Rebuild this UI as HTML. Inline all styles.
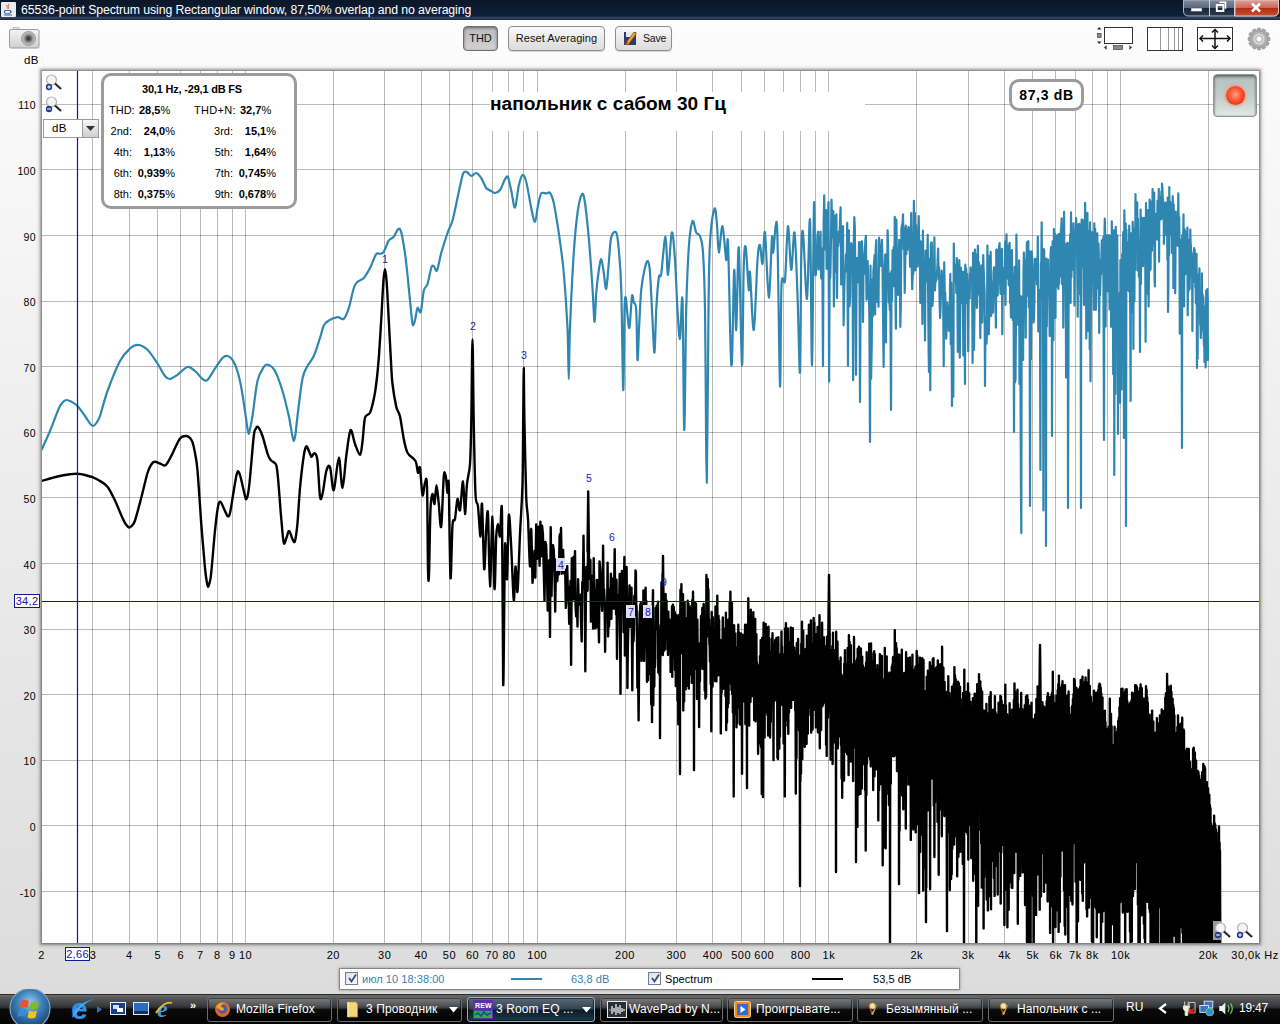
<!DOCTYPE html>
<html><head><meta charset="utf-8"><title>65536-point Spectrum</title>
<style>
*{box-sizing:border-box;margin:0;padding:0}
html,body{width:1280px;height:1024px;overflow:hidden}
body{position:relative;font-family:"Liberation Sans",sans-serif;font-size:11px;color:#000;
 background:linear-gradient(#fdfdfd 0,#fbfbfb 60px,#ececec 500px,#dcdcdc 994px,#dcdcdc 1024px)}
.abs{position:absolute}
#titlebar{left:0;top:0;width:1280px;height:20px;background:linear-gradient(#0b1728 0,#0f1f38 15px,#15294a 17px,#4f5f76 18px,#0f1d33 19px,#2a3a50 20px)}
#titlebar .t{left:21px;top:2px;color:#fff;font-size:12.3px;line-height:16px;white-space:nowrap;letter-spacing:-0.1px}
.btn{border:1px solid #8e8e8e;border-radius:4px;background:linear-gradient(#fbfbfb,#e9e9e9 50%,#dcdcdc);font-size:11px;line-height:23px;text-align:center;color:#111;height:25px;top:26px;box-shadow:0 1px 1px rgba(0,0,0,.15)}
.btn.on{background:linear-gradient(#b9b9b9,#d2d2d2);border-color:#6e6e6e;box-shadow:inset 0 1px 3px rgba(0,0,0,.45)}
.ylab{left:0;width:36px;text-align:right;font-size:10.500px;line-height:12px;letter-spacing:.35px}
.xlab{top:949px;font-size:11px;line-height:12px;letter-spacing:.5px;white-space:nowrap;transform:translateX(-50%)}
#thd{left:101px;top:73px;width:196px;height:136px;border:3px solid #9b9b9b;border-radius:10px;background:#fff}
#thd div{position:absolute;font-size:11px;line-height:13px;white-space:nowrap}
#thd b{font-weight:bold}
#lvl{left:1009px;top:79px;width:75px;height:32px;border:3px solid #9b9b9b;border-radius:10px;background:#fff;font-weight:bold;font-size:14px;line-height:27px;text-align:center;letter-spacing:.7px}
#ttl{left:490px;top:92px;width:375px;height:39px;background:#fff;font-weight:bold;font-size:19.1px;line-height:22px;padding-top:1px;white-space:nowrap}
#legend{left:340px;top:969px;width:619px;height:20px;background:#fff;box-shadow:0 0 0 1px rgba(0,0,0,.22),0 0 3px 1px rgba(0,0,0,.35)}
#legend div{position:absolute;font-size:11px;line-height:13px;top:4px;white-space:nowrap;letter-spacing:.05px}
.cb{width:13px;height:13px;border:1px solid #6f7f99;background:linear-gradient(135deg,#d9dde6,#fff);top:3px !important}
#taskbar{left:0;top:994px;width:1280px;height:30px;background:linear-gradient(#2b2b2b 0,#2b2b2b 1px,#6b6c6e 1px,#565759 4px,#38393b 12px,#262728 14px,#0a0a0a 15px,#030303 30px)}
.tb{top:3px;height:25px;border:1px solid #6b6d70;border-radius:3px;background:linear-gradient(rgba(255,255,255,.22),rgba(255,255,255,.08) 48%,rgba(255,255,255,0) 52%);color:#fff;font-size:12px;line-height:22px;white-space:nowrap;overflow:hidden;padding-left:28px;letter-spacing:.1px;box-shadow:inset 0 0 0 1px rgba(0,0,0,.5)}
.tb.act{background:linear-gradient(#5a6a78,#33424f 48%,#0f1a24 52%,#1c3a4e);border-color:#9fb0bd}
.ti{position:absolute;left:6px;top:3px;width:17px;height:17px}
</style></head><body>

<div id="titlebar" class="abs"><svg class="abs" style="left:1px;top:2px" width="15" height="15" viewBox="0 0 15 15"><rect width="15" height="15" rx="1" fill="#e9ecf2"/><path d="M8 2c-2 2 1 3-1 5M6 3c-1 1.5 1 2 0 3.500" stroke="#d9612b" fill="none" stroke-width="1"/><path d="M3.500 8.500h6v2.500q-3 2-6 0zM9.500 9q2 0 0 2" stroke="#3d6fa5" fill="none" stroke-width="1"/><path d="M3 13h8" stroke="#3d6fa5"/></svg><div class="abs t">65536-point Spectrum using Rectangular window, 87,50% overlap and no averaging</div>
<svg class="abs" style="left:1183px;top:0" width="96" height="17" viewBox="0 0 96 17">
<defs><linearGradient id="wc" x1="0" y1="0" x2="0" y2="1"><stop offset="0" stop-color="#7f8b9c"/><stop offset=".48" stop-color="#5a687c"/><stop offset=".52" stop-color="#18263a"/><stop offset="1" stop-color="#2c3b52"/></linearGradient>
<linearGradient id="wx" x1="0" y1="0" x2="0" y2="1"><stop offset="0" stop-color="#dca396"/><stop offset=".48" stop-color="#c96a58"/><stop offset=".52" stop-color="#b32d16"/><stop offset="1" stop-color="#c8502f"/></linearGradient></defs>
<path d="M.5 0v11q0 5 5 5h85q5 0 5-5V0z" fill="url(#wc)" stroke="#aab5c4" stroke-width="1"/>
<path d="M52 0h43.500v11q0 5-5 5H52z" fill="url(#wx)" stroke="#e0c9c4" stroke-width="1"/>
<path d="M26.500 0v16M51.500 0v16" stroke="#c9d2de" stroke-width="1"/>
<rect x="8" y="8" width="11" height="3.500" fill="#fff" stroke="#44506a" stroke-width=".6"/>
<path d="M36.500 2.300h6v6.500" fill="none" stroke="#fff" stroke-width="1.600"/><rect x="33.800" y="5" width="6.600" height="6" fill="none" stroke="#fff" stroke-width="1.900"/>
<path d="M69 3.500l8 8M77 3.500l-8 8" stroke="#fff" stroke-width="2.600"/>
</svg>
</div>
<svg class="abs" style="left:8px;top:26px" width="33" height="24" viewBox="0 0 33 24">
<defs><linearGradient id="cg" x1="0" y1="0" x2="0" y2="1"><stop offset="0" stop-color="#f4f4f4"/><stop offset="1" stop-color="#cfcfcf"/></linearGradient>
<radialGradient id="lg"><stop offset="0" stop-color="#2a2a2a"/><stop offset=".3" stop-color="#555"/><stop offset=".6" stop-color="#9a9a9a"/><stop offset="1" stop-color="#c9c9c9"/></radialGradient></defs>
<rect x="5" y="1.500" width="6" height="3" fill="#ddd" stroke="#aaa" stroke-width=".6"/>
<rect x="1.500" y="3.500" width="29.500" height="18.500" rx="1.500" fill="url(#cg)" stroke="#9a9a9a"/>
<circle cx="20.500" cy="12.500" r="7" fill="url(#lg)" stroke="#8a8a8a" stroke-width=".8"/>
</svg>
<div class="abs btn on" style="left:463px;width:35px">THD</div>
<div class="abs btn" style="left:508px;width:97px;letter-spacing:.05px">Reset Averaging</div>
<div class="abs btn" style="left:615px;width:57px;text-align:left;padding-left:27px;letter-spacing:-.2px;font-size:10.500px">Save<svg class="abs" style="left:7px;top:4px" width="15" height="15" viewBox="0 0 15 15"><rect x="1" y="1" width="12" height="13" fill="#2d3a6e"/><rect x="3" y="1" width="8" height="5" fill="#e8e8e8"/><path d="M2 13L11 1l2.500 1.500L5 14z" fill="#e9a620" stroke="#7a4a10" stroke-width=".7"/><path d="M2 13l1.500-3 1.800 2z" fill="#b22"/></svg></div>
<svg class="abs" style="left:1094px;top:24px" width="180" height="30" viewBox="1094 24 180 30">
<rect x="1104.500" y="27.500" width="28" height="16" fill="#fff" stroke="#333" stroke-width="1"/>
<path d="M1099.200 27l2.300 2.600h-4.600zM1099.200 44l2.300-2.600h-4.600zM1104 47.500l2.600-2.300v4.600zM1132 47.500l-2.600-2.300v4.600z" fill="#333"/>
<rect x="1097.500" y="33.500" width="3.600" height="4" fill="#888" stroke="#444" stroke-width=".7"/>
<rect x="1113.500" y="45.500" width="9" height="4" fill="#888" stroke="#444" stroke-width=".7"/>
<rect x="1147.500" y="27.500" width="35" height="23" fill="#fff" stroke="#333" stroke-width="1"/>
<path d="M1160.500 28v22M1168.500 28v22M1174.500 28v22M1178.500 28v22" stroke="#999" stroke-width="1"/>
<rect x="1197.500" y="27.500" width="35" height="23" fill="#fff" stroke="#333" stroke-width="1"/>
<path d="M1200 38.500h30M1215 29.500v19" stroke="#111" stroke-width="1.500"/>
<path d="M1203 35.500l-3 3 3 3M1227 35.500l3 3-3 3M1212 32.500l3-3 3 3M1212 45.500l3 3 3-3" fill="none" stroke="#111" stroke-width="1.500"/>
<g transform="translate(1259 39)"><g fill="#a9a9a9" stroke="#8a8a8a" stroke-width=".5"><rect x="-1.900" y="-11" width="3.800" height="5" rx="1" transform="rotate(0)"/><rect x="-1.900" y="-11" width="3.800" height="5" rx="1" transform="rotate(30)"/><rect x="-1.900" y="-11" width="3.800" height="5" rx="1" transform="rotate(60)"/><rect x="-1.900" y="-11" width="3.800" height="5" rx="1" transform="rotate(90)"/><rect x="-1.900" y="-11" width="3.800" height="5" rx="1" transform="rotate(120)"/><rect x="-1.900" y="-11" width="3.800" height="5" rx="1" transform="rotate(150)"/><rect x="-1.900" y="-11" width="3.800" height="5" rx="1" transform="rotate(180)"/><rect x="-1.900" y="-11" width="3.800" height="5" rx="1" transform="rotate(210)"/><rect x="-1.900" y="-11" width="3.800" height="5" rx="1" transform="rotate(240)"/><rect x="-1.900" y="-11" width="3.800" height="5" rx="1" transform="rotate(270)"/><rect x="-1.900" y="-11" width="3.800" height="5" rx="1" transform="rotate(300)"/><rect x="-1.900" y="-11" width="3.800" height="5" rx="1" transform="rotate(330)"/></g><circle r="8.300" fill="#b4b4b4" stroke="#8f8f8f" stroke-width=".6"/><circle r="5.500" fill="#d8d8d8"/><circle r="3.200" fill="#fafafa" stroke="#999" stroke-width=".8"/></g>
</svg>
<div class="abs" style="left:24px;top:54px;font-size:11.500px;line-height:13px;letter-spacing:.3px">dB</div>
<div class="abs" style="left:42px;top:71px;width:1217px;height:872px;background:#fff;box-shadow:0 0 0 1px rgba(0,0,0,.12),0 0 0 2px rgba(0,0,0,.09),0 0 0 3px rgba(0,0,0,.05),0 0 4px 2px rgba(0,0,0,.28)"></div>
<svg class="abs" style="left:0;top:0" width="1280" height="1024" viewBox="0 0 1280 1024"><defs><clipPath id="pc"><rect x="42" y="71" width="1217" height="872"/></clipPath></defs><g clip-path="url(#pc)">
<path d="M92.5 71V943M129.5 71V943M157.5 71V943M180.5 71V943M200.5 71V943M217.5 71V943M232.5 71V943M245.5 71V943M333.5 71V943M384.5 71V943M421.5 71V943M449.5 71V943M472.5 71V943M492.5 71V943M508.5 71V943M523.5 71V943M537.5 71V943M625.5 71V943M676.5 71V943M712.5 71V943M741.5 71V943M764.5 71V943M783.5 71V943M800.5 71V943M815.5 71V943M828.5 71V943M916.5 71V943M968.5 71V943M1004.5 71V943M1032.5 71V943M1055.5 71V943M1075.5 71V943M1092.5 71V943M1107.5 71V943M1120.5 71V943M1208.5 71V943" stroke="rgba(0,0,0,.27)" stroke-width="1" fill="none" shape-rendering="crispEdges"/>
<path d="M42 891.5H1259M42 825.5H1259M42 760.5H1259M42 694.5H1259M42 629.5H1259M42 563.5H1259M42 497.5H1259M42 432.5H1259M42 366.5H1259M42 301.5H1259M42 235.5H1259M42 169.5H1259M42 104.5H1259" stroke="rgba(0,0,0,.27)" stroke-width="1" fill="none" shape-rendering="crispEdges"/>

<path d="M41.2 450.5C42.6 447.4 47.2 437.7 50.0 431.0C52.8 424.3 56.7 413.1 58.8 408.5C60.8 403.9 61.8 403.4 63.0 402.0C64.2 400.6 65.0 400.1 66.2 400.0C67.5 399.9 69.2 400.5 71.0 401.5C72.8 402.5 75.3 403.7 77.5 406.0C79.7 408.3 83.0 413.2 85.0 416.0C87.0 418.8 88.7 421.9 90.0 423.5C91.3 425.1 92.0 426.0 93.0 426.0C94.0 426.0 94.9 425.1 96.0 423.5C97.1 421.9 98.2 421.2 100.0 416.0C101.8 410.8 104.3 399.8 107.5 391.0C110.7 382.2 116.4 367.8 120.0 361.0C123.6 354.2 127.1 351.1 130.0 348.5C132.9 345.9 135.2 344.6 138.0 344.8C140.8 344.9 144.4 346.8 147.5 349.8C150.6 352.8 154.7 359.3 157.5 363.5C160.3 367.7 163.0 373.5 165.0 376.0C167.0 378.5 168.0 379.2 170.0 379.0C172.0 378.8 174.7 376.7 177.5 374.8C180.3 372.8 184.7 367.6 187.5 367.0C190.3 366.4 192.6 369.1 195.0 371.0C197.4 372.9 200.5 377.6 202.5 379.0C204.5 380.4 205.5 381.7 207.5 380.0C209.5 378.3 212.6 372.0 215.0 368.5C217.4 365.0 220.5 360.0 222.5 358.0C224.5 356.0 225.7 355.4 227.5 356.0C229.3 356.6 231.8 358.0 233.8 362.0C235.8 366.0 238.2 373.2 240.0 381.0C241.8 388.8 243.8 403.3 245.0 411.0C246.2 418.7 246.9 425.3 247.5 429.0C248.1 432.7 248.3 434.0 248.8 434.0C249.2 434.0 249.4 431.9 250.0 429.0C250.6 426.1 251.3 423.7 252.5 416.0C253.7 408.3 255.7 388.8 257.5 381.0C259.3 373.2 262.1 369.6 263.8 367.0C265.4 364.4 266.2 364.1 268.0 364.8C269.8 365.4 272.7 366.8 275.0 371.0C277.3 375.2 280.3 383.8 282.5 391.0C284.7 398.2 287.2 409.1 288.8 416.0C290.3 422.9 291.2 430.0 292.0 434.0C292.8 438.0 293.2 441.0 293.8 441.0C294.3 441.0 294.9 438.0 295.5 434.0C296.1 430.0 296.4 424.9 297.5 416.0C298.6 407.1 300.9 386.5 302.5 378.5C304.1 370.5 305.7 369.6 307.5 366.0C309.3 362.4 311.8 360.5 313.8 356.0C315.8 351.5 318.4 342.9 320.0 338.0C321.6 333.1 322.4 328.3 323.8 325.5C325.1 322.7 326.6 321.8 328.8 320.5C330.9 319.2 335.1 317.5 337.5 317.2C339.9 317.0 341.9 320.2 343.8 318.8C345.6 317.3 347.1 312.9 348.8 308.0C350.4 303.1 352.4 292.2 353.8 288.0C355.1 283.8 355.9 283.4 357.5 281.8C359.1 280.1 361.8 280.2 363.8 278.0C365.8 275.8 368.0 271.8 370.0 268.0C372.0 264.2 374.6 256.5 376.2 254.2C377.9 252.0 378.8 254.2 380.0 253.8C381.2 253.3 382.4 253.9 383.8 251.8C385.1 249.6 387.1 242.9 388.8 240.5C390.4 238.1 392.4 238.4 393.8 236.8C395.1 235.1 396.5 231.2 397.5 230.0C398.5 228.8 399.2 228.0 400.0 229.2C400.8 230.5 401.5 232.6 402.5 238.0C403.5 243.4 405.1 253.0 406.2 263.0C407.4 273.0 409.1 291.4 410.0 300.5C410.9 309.6 411.5 316.0 412.0 320.0C412.5 324.0 412.5 325.4 413.0 325.5C413.5 325.6 414.3 323.3 415.0 320.5C415.7 317.7 416.6 309.4 417.5 308.0C418.4 306.6 419.8 314.6 420.8 311.8C421.8 308.9 422.7 294.9 423.8 290.5C424.8 286.1 426.3 287.9 427.5 284.2C428.7 280.6 430.2 270.9 431.2 268.0C432.2 265.1 432.8 265.6 433.8 266.0C434.7 266.4 435.8 272.6 437.0 270.5C438.2 268.4 439.6 259.0 441.2 253.0C442.9 247.0 445.7 238.2 447.5 233.0C449.3 227.8 450.9 226.1 452.5 220.5C454.1 214.9 455.9 205.2 457.5 198.0C459.1 190.8 461.3 179.7 462.5 175.5C463.7 171.3 464.2 172.2 465.0 171.8C465.8 171.3 466.5 171.8 467.5 172.5C468.5 173.2 469.9 175.9 471.2 176.0C472.6 176.1 474.6 172.7 476.2 173.0C477.9 173.3 479.6 175.6 481.2 178.0C482.9 180.4 484.6 185.9 486.2 188.0C487.9 190.1 489.9 190.2 491.2 191.0C492.6 191.8 493.6 193.2 495.0 193.0C496.4 192.8 498.4 192.2 500.0 190.0C501.6 187.8 503.7 181.3 505.0 179.2C506.3 177.2 507.0 175.4 508.0 177.2C509.0 179.1 510.1 185.7 511.2 190.5C512.4 195.3 513.8 208.3 515.0 207.5C516.2 206.7 517.5 190.7 518.8 185.5C520.0 180.3 521.3 175.6 522.5 175.0C523.7 174.4 524.9 176.5 526.2 181.8C527.6 187.0 529.9 201.6 531.2 208.0C532.6 214.4 533.9 222.2 535.0 221.8C536.1 221.3 537.0 210.0 538.0 205.5C539.0 201.0 539.9 195.4 541.2 193.5C542.6 191.6 544.9 193.6 546.2 193.5C547.6 193.4 548.8 191.5 550.0 193.0C551.2 194.5 552.4 196.6 553.8 203.0C555.1 209.4 557.1 221.8 558.8 233.0C560.4 244.2 562.4 257.8 563.8 273.0C565.1 288.2 566.7 311.0 567.5 328.0C568.3 345.0 568.4 379.2 568.8 379.2C569.1 379.2 569.2 348.2 570.0 328.0C570.8 307.8 572.5 271.4 573.8 253.0C575.0 234.6 576.2 222.4 577.5 213.0C578.8 203.6 580.8 195.8 582.0 194.2C583.2 192.7 583.9 196.0 585.0 203.0C586.1 210.0 587.5 224.4 588.8 238.0C590.0 251.6 591.6 274.6 592.5 288.0C593.4 301.4 593.9 320.9 594.5 321.8C595.1 322.6 595.6 301.2 596.2 293.0C596.9 284.8 598.0 275.9 598.8 270.5C599.5 265.1 600.5 258.9 601.2 259.2C602.0 259.6 603.0 268.3 603.8 273.0C604.5 277.7 605.5 290.4 606.2 288.8C607.0 287.1 608.0 271.2 608.8 263.0C609.5 254.8 610.0 242.4 611.2 237.5C612.5 232.6 615.0 230.5 616.2 232.5C617.5 234.5 618.0 241.2 618.8 250.0C619.5 258.8 620.5 265.1 621.2 287.5C622.0 309.9 622.7 386.4 623.2 390.0C623.8 393.6 624.1 324.8 624.5 310.0C624.9 295.2 625.3 296.7 625.8 297.5C626.2 298.3 626.9 310.2 627.5 315.0C628.1 319.8 628.8 330.5 629.5 327.5C630.2 324.5 631.3 300.2 632.0 296.2C632.7 292.2 633.1 300.3 633.8 302.5C634.4 304.7 635.6 300.8 636.2 310.0C636.9 319.2 637.0 357.6 637.5 360.0C638.0 362.4 638.6 336.2 639.2 325.0C639.9 313.8 640.3 299.2 641.2 290.0C642.2 280.8 643.9 272.1 645.0 267.5C646.1 262.9 647.2 260.4 648.0 261.2C648.8 262.1 649.3 263.1 650.0 272.5C650.7 281.9 651.8 307.2 652.5 320.0C653.2 332.8 653.9 354.1 654.5 352.5C655.1 350.9 655.6 322.0 656.2 310.0C656.9 298.0 658.0 283.3 658.8 277.5C659.5 271.7 660.2 280.4 661.2 273.8C662.3 267.1 664.4 236.1 665.5 236.2C666.6 236.4 667.0 275.6 668.0 275.0C669.0 274.4 670.6 234.9 671.8 232.5C672.9 230.1 674.1 247.6 675.0 260.0C675.9 272.4 676.7 297.4 677.5 310.0C678.3 322.6 679.2 340.4 680.0 338.8C680.8 337.1 681.8 285.4 682.5 300.0C683.2 314.6 683.6 428.4 684.2 430.0C684.9 431.6 685.5 339.2 686.2 310.0C687.0 280.8 687.8 261.7 688.8 247.5C689.8 233.3 691.3 223.7 692.5 221.2C693.7 218.8 695.0 230.1 696.2 232.5C697.5 234.9 698.9 233.1 700.0 236.2C701.1 239.4 702.2 240.7 703.0 252.5C703.8 264.3 704.4 273.1 705.0 310.0C705.6 346.9 706.2 483.0 706.8 483.0C707.3 483.0 708.0 348.5 708.5 310.0C709.0 271.5 709.0 258.7 710.0 242.5C711.0 226.3 713.4 211.6 714.5 208.8C715.6 205.9 716.3 218.0 717.0 225.0C717.7 232.0 717.9 252.3 718.8 252.5C719.6 252.7 721.3 225.1 722.5 226.2C723.7 227.4 725.4 257.4 726.2 260.0C727.1 262.6 727.3 228.9 728.0 242.5C728.7 256.1 729.9 326.2 730.5 345.0C731.1 363.8 731.4 372.0 732.0 360.0C732.6 348.0 733.6 274.8 734.2 270.0C734.9 265.2 735.5 333.6 736.2 330.0C737.0 326.4 737.8 241.9 738.8 247.5C739.7 253.1 741.2 362.2 742.0 365.0C742.8 367.8 743.1 283.8 743.8 265.0C744.4 246.2 745.0 243.5 745.8 247.5C746.5 251.5 748.1 286.0 748.8 290.0C749.4 294.0 749.2 266.1 750.0 272.5C750.8 278.9 752.5 332.0 753.8 330.0C755.0 328.0 756.5 273.6 757.5 260.0C758.5 246.4 759.2 244.4 760.0 245.0C760.8 245.6 761.7 265.8 762.5 263.8C763.3 261.8 764.0 227.1 765.0 232.5C766.0 237.9 767.6 296.7 768.8 297.5C769.9 298.3 771.3 244.7 772.0 237.5C772.7 230.3 772.6 254.5 773.2 252.5C773.9 250.5 775.1 227.0 775.8 225.0C776.4 223.0 776.8 214.2 777.5 240.0C778.2 265.8 779.4 379.1 780.0 386.2C780.6 393.4 780.7 302.0 781.5 285.0C782.3 268.0 784.0 289.4 785.0 280.0C786.0 270.6 787.0 227.8 788.0 226.2C789.0 224.7 790.2 269.0 791.2 270.0C792.3 271.0 793.5 228.5 794.5 232.5C795.5 236.5 796.6 272.6 797.5 295.0C798.4 317.4 799.4 378.1 800.0 372.5C800.6 366.9 800.8 282.4 801.2 260.0C801.7 237.6 802.1 226.3 803.0 232.5C803.9 238.7 805.9 300.8 807.0 298.8C808.1 296.8 809.2 209.4 810.0 220.0C810.8 230.6 811.4 367.6 812.0 365.0C812.6 362.4 813.4 218.2 814.0 203.8C814.6 189.3 814.9 270.0 815.5 275.0C816.1 280.0 817.2 241.4 817.5 235.0L818 231.8L818.6 269.6L819.2 263.5L819.9 250.1L820.5 231.5L821.1 277.7L821.7 278.9L822.3 248.6L823 366L823.6 227.9L824.2 195.4L824.8 234.6L825.4 249.4L826 210L826.6 269L827.2 221.8L827.9 220.8L828.5 202.2L829.1 381.7L829.7 257.1L830.3 277.9L830.9 245.3L831.5 199.5L832.1 225.3L832.7 237.4L833.3 211.2L833.9 306.4L834.6 229.7L835.2 215.9L835.8 271.7L836.4 214.4L837 298.1L837.6 238.1L838.2 245.9L838.8 231.5L839.4 241.8L840 222.2L840.6 207.3L841.2 284.6L841.8 227L842.4 271.6L843 226.1L843.6 325.3L844.2 293.5L844.8 270.3L845.4 271.8L846 254.4L846.6 268.9L847.2 222.8L848 366L848.3 283.3L848.9 230.4L849.5 306.4L850.1 296.7L850.7 245.7L851.3 243.2L851.9 249.9L852.5 245.9L853.1 380.2L853.7 247.2L854.3 217.2L854.8 227.4L855.4 276L856 374.8L856.6 258L857.2 258.3L857.8 263.4L858.4 282.5L859 242.1L859.5 270L860 402L860.7 272.4L861.3 241.6L861.9 241.4L862.5 253.9L863 321.9L863.6 255L864.2 273.9L864.8 253.7L865.4 239.4L865.9 235.9L866.5 299.8L867.1 295.3L867.7 261L868.2 285.9L868.8 285.8L869.4 319.7L870 442L870.5 265.7L871.1 378.7L871.7 345.9L872.3 279.3L872.8 316.3L873.4 271.5L874 263.3L874.6 255.1L875.1 314.5L875.7 249L876.3 240.2L876.8 301.8L877.4 297.4L878 270.6L878.5 306.7L879.1 237.7L879.7 255.4L880.2 257.4L880.8 265.9L881.4 249.3L881.9 239.8L882.5 260.3L883.1 319.6L883.6 367L884.2 293.5L884.7 269.9L885.3 254.4L885.9 342.4L886.4 271.8L887 289.4L887.6 230.3L888.1 248.7L888.7 302.6L889.2 295.3L889.8 310L890.3 273.6L891 410L891.5 270.8L892 301L892.6 250.2L893.1 265.3L893.7 247L894.2 286.3L894.8 216.9L895.3 275.9L895.9 328.7L896.4 219.7L897 265.9L897.5 269.7L898.1 294.9L898.6 263.4L899.2 239.9L899.7 248.9L900.3 327L900.8 304.7L901.4 229.1L901.9 225.2L902.5 224.7L903 214.3L903.6 249.2L904.1 227.9L904.7 292.9L905.2 264.6L905.8 225.6L906.3 254.1L906.8 238.7L907.4 250L907.9 231.2L908.5 227L909 228L909.5 240.3L910.1 266.7L910.6 252.1L911.2 213L911.7 265.8L912.2 289.2L912.8 272.4L913.3 274.3L913.9 200.8L914.4 243.2L914.9 212.9L915.5 270.4L916 225.1L916.5 266.3L917.1 232.3L917.6 266.6L918.1 238.1L918.7 216L919.2 244.7L919.7 240.6L920.3 303L920.8 241.5L921.3 256.6L921.9 261L922.4 324L922.9 230.6L923.4 268L924 261.6L924.5 282.6L925 340.5L925.6 250.7L926.1 281.6L926.6 267.4L927.1 271.1L927.7 234.9L928.2 299.5L928.7 356L929 372L929.7 258.5L930.3 390.3L930.8 244.9L931.3 242.4L931.8 242.8L932.4 306L932.9 299.4L933.4 272.6L933.9 286.8L934.4 237.4L935 290.4L935.5 275.3L936 281.5L936.5 273L937 274.6L937.5 264L938.1 248.6L938.6 279.2L939.1 267.7L939.6 302.9L940.1 317.9L940.6 306.5L941.1 284.5L941.7 270.7L942.2 281.1L942.7 289L943.2 301.3L943.7 366.2L944.2 262.3L944.7 291.5L945.2 292.7L945.7 311.9L946.2 338.7L946.8 318.9L947.3 302.6L947.8 315.9L948.3 306L948.8 330.8L949.3 308.6L949.8 306.8L950.3 274.1L950.8 344.3L951.3 282.7L952 406L952.3 323.3L952.8 365.4L953.3 396.7L953.8 243.5L954.3 276.8L954.8 276.6L955.3 281.5L955.8 264.7L956.3 292.9L956.8 258.1L957.3 275L957.8 351.8L958.3 309.7L958.8 285.1L959.3 260.1L959.8 357.6L960.3 304.9L960.8 267.7L961.3 276.2L961.8 299.2L962.3 303L962.8 271.8L963.3 355.5L963.8 275.9L964.3 271.7L965 384L965.3 264.7L965.7 303.7L966.2 268.4L966.7 296.4L967.2 273.8L967.7 280.3L968.2 351.3L968.7 286.7L969.2 284.7L969.7 298.6L970.1 274.6L970.6 267.4L971.1 281.4L971.6 274.3L972.1 268.7L972.6 363L973.1 252.9L973.6 320.7L974 349.9L974.5 307.8L975 249.6L975.5 290.6L976 254.4L976.5 299.2L976.9 307.9L977.4 273.4L977.9 245.5L978.4 294.4L978.9 262.2L979.3 278.2L979.8 288L980.3 338.1L980.8 281.7L981.3 265.4L981.7 318.3L982.2 322.5L982.7 292L983.2 255L983.6 268.1L984.1 282L984.6 292.6L985 386L985.5 317.5L986 323.8L986.5 343.6L987 331.4L987.4 245.7L987.9 293L988.4 255.9L988.8 334.3L989.3 308L989.8 309.2L990.3 264.2L990.7 251.9L991.2 316L991.7 292.8L992.1 293.7L992.6 281.7L993.1 312.6L993.5 272L994 267.4L994.5 272.4L994.9 268.7L995.4 292.3L995.9 327.6L996.3 250L996.8 249.3L997.3 281.9L997.7 295.6L998.2 259.5L998.7 264.7L999.1 246.8L999.6 243.1L1000 279L1000.5 293.8L1001 290.5L1001.4 254.1L1001.9 248.8L1002.3 334.3L1002.8 278.4L1003.3 268.3L1003.7 290.3L1004.2 293.6L1004.6 274.8L1005.1 241.6L1005.5 304.9L1006 251.7L1006.5 234.4L1006.9 259.4L1007.4 271.5L1007.8 278.7L1008.3 245.7L1008.7 285.2L1009.2 266.1L1009.6 242.9L1010.1 303L1010.5 296.5L1011 317.5L1011.4 283.3L1011.9 250.2L1012.4 296.1L1012.8 320.1L1013.3 274.4L1013.7 323.5L1014 432L1014.6 266.8L1015 382.4L1015.5 379.7L1015.9 328.5L1016.4 234.6L1016.8 268.7L1017.3 300.2L1017.7 300.2L1018.2 324.9L1018.6 307.6L1019.1 260.4L1019.5 383.9L1020 295.5L1020.4 361.3L1021 494L1021.3 533.1L1021.7 296.7L1022.2 331.1L1022.6 323.8L1023.1 360L1023.5 273.3L1023.9 252.6L1024.4 277.3L1024.8 260.4L1025.3 292.5L1025.7 337.7L1026.1 271.6L1026.6 255.5L1027 242.1L1027.5 277.2L1027.9 295.9L1028.3 241L1028.8 307.3L1029.2 259.8L1029.6 251.3L1030 506L1030.5 286.9L1030.9 359.6L1031.4 285.2L1031.8 251.3L1032.2 259.7L1032.7 273.9L1033.1 300.7L1033.5 322.6L1034 318.4L1034.4 301.3L1034.8 258.9L1035.3 272.8L1035.7 266.7L1036.1 279.2L1036.6 258.5L1037 284.4L1037.4 274.7L1037.8 236.6L1038.3 331.4L1038.7 289.5L1039.1 325.9L1039.6 311.9L1040 310.6L1040.4 470L1040.8 263.1L1041.3 264.7L1041.7 222.3L1042.1 298.2L1042.5 286.3L1043 285.3L1043.4 510.4L1043.8 249.1L1044.2 250.9L1044.7 308.1L1045.1 324.2L1045.5 272.1L1046 546L1046.3 258.7L1046.8 326.6L1047.2 273L1047.6 268.2L1048 259.7L1048.4 288.7L1048.9 284.3L1049.3 297.9L1049.7 336.1L1050.1 307.6L1050.5 256L1051 247.2L1051.4 312L1051.8 313.8L1052 436L1052.6 241.4L1053 326.1L1053.4 340.2L1053.9 229.2L1054.3 246.3L1054.7 281.9L1055.1 233.9L1055.5 318L1055.9 241.2L1056.3 286.9L1056.8 242L1057.2 236.4L1057.6 235L1058 259.7L1058.4 289L1058.8 234.1L1059.2 283.5L1059.6 240.5L1060 276.7L1060.4 242.1L1060.9 230.8L1061.3 226.8L1061.7 218.3L1062.1 284.3L1062.5 247.5L1062.9 225.5L1063.3 327.6L1063.7 278L1064.1 211.8L1064.5 289.4L1064.9 269.7L1065.3 251.3L1065.7 258L1066.1 377.4L1066.5 243.5L1066.9 275.7L1067.3 275.7L1067.8 242.9L1068 508L1068.6 295.6L1069 275.9L1069.4 253.3L1069.8 260.1L1070.2 234.1L1070.6 303L1071 212.3L1071.4 277.3L1071.8 253.4L1072.2 234.3L1072.6 269.7L1073 269.2L1073.4 223.4L1073.7 257.8L1074.1 230.5L1074.5 305.7L1074.9 241.4L1075.3 241.3L1075.7 233.8L1076.1 218L1076.5 231.3L1076.9 228.4L1077.3 273.7L1077.7 316.7L1078.1 232.8L1078.5 224L1078.9 261L1079.3 223.9L1079.7 245.4L1080.1 294.6L1080.5 230.1L1081 508L1081.2 260.1L1081.6 219.5L1082 231.9L1082.4 267.2L1082.8 219.9L1083.2 228.5L1083.6 263.5L1084 305L1084.3 256L1084.7 275L1085.1 202.8L1085.5 234.5L1085.9 235.9L1086.3 338.6L1086.7 239.1L1087.1 298.7L1087.4 212.9L1087.8 256L1088.2 330.8L1088.6 297.5L1089 267.3L1089.4 230.5L1089.7 349.2L1090.1 222.3L1090.5 381.3L1090.9 301L1091.3 290.6L1091.7 263.9L1092 232L1092.4 244.2L1092.8 283.2L1093.2 282.4L1093.6 249.5L1093.9 309.8L1094.3 223.4L1094.7 243.3L1095.1 228.8L1095.5 246.5L1095.8 309.9L1096.2 302.1L1096.6 235.7L1097 247.1L1097.3 233.3L1097.7 288.1L1098.1 260.4L1098.5 243.7L1098.8 253.5L1099.2 333L1099.6 260L1100 295.1L1100.3 285.1L1100.7 264.9L1101.1 274.4L1101.5 251.5L1101.8 240.3L1102.2 265.2L1102.6 246.2L1103 247.2L1103.3 237.2L1103.7 347.6L1104 440L1104.4 236.5L1104.8 218.6L1105.2 236.4L1105.6 326.6L1105.9 243.2L1106.3 281.9L1106.7 235.3L1107 278.3L1107.4 252.2L1107.8 291.3L1108.1 260.4L1108.5 242.1L1108.9 235.2L1109.2 267.1L1109.6 309.5L1110 280.3L1110.3 251.3L1110.7 235.5L1111.1 326.8L1111.4 310.8L1111.8 221.4L1112.2 275.4L1112.5 292.4L1112.9 275.6L1113.2 374.3L1113.6 322.3L1114 230.4L1114.3 475L1114.7 236.4L1115 240.6L1115.4 393.9L1115.8 226.8L1116.1 243.5L1116.5 272.2L1116.9 235.3L1117.2 235.3L1117.6 302.6L1118 434L1118.3 293.1L1118.6 302.8L1119 325.7L1119.4 334.2L1119.7 312L1120.1 402.8L1120.4 260.1L1120.8 288.3L1121.1 262.7L1121.5 389.5L1121.9 282.1L1122.2 254.1L1122.6 284.3L1122.9 243.2L1123.3 231.8L1123.6 250.6L1124 438L1124.3 210.4L1124.7 229.9L1125 259.7L1125.4 303.5L1125.7 223.6L1126 526L1126.4 229.8L1126.8 263.5L1127.1 242.1L1127.5 254.8L1127.9 290L1128.2 250L1128.6 247L1128.9 291.3L1129.2 225.7L1129.6 241.5L1129.9 285L1130.3 312.3L1130.6 401L1131 233.4L1131.3 271.1L1131.7 235.9L1132 281.6L1132.4 312.1L1132.7 221.8L1133.1 235.7L1133.4 348.9L1133.8 235L1134.1 267.6L1134.4 301.3L1134.8 228.8L1135.1 270L1135.5 194.2L1135.8 231.5L1136.2 219.6L1136.5 231.2L1136.8 222.3L1137.2 202.3L1137.5 270.5L1137.9 218.5L1138.2 246L1138.6 244.2L1138.9 276.9L1139.2 276.1L1139.6 248.8L1140 352L1140.3 256.8L1140.6 209.5L1140.9 284.1L1141.3 224.4L1141.6 220.6L1141.9 217.8L1142.3 228.8L1142.6 257.9L1143 266.2L1143.3 252.5L1143.6 250.6L1144 217.8L1144.3 222.4L1144.6 221L1145 228.5L1145.3 267.3L1145.6 341.8L1146 203.1L1146.3 294.4L1146.6 275.8L1147 228.3L1147.3 243.9L1147.6 252.4L1148 210.1L1148.3 237L1148.6 306.6L1149 265L1149.3 271.5L1149.6 199.7L1150 243.3L1150.3 226.7L1150.6 269.6L1151 205.8L1151.3 229.6L1151.6 201.3L1151.9 250.6L1152.3 241.7L1152.6 189L1152.9 213.4L1153.3 201.5L1153.6 233.3L1153.9 232.6L1154.2 192.5L1154.6 279.3L1154.9 286.5L1155.2 219L1155.6 227L1155.9 213.8L1156.2 228.6L1156.5 215.2L1156.9 217.4L1157.2 239.4L1157.5 200.7L1157.8 207.8L1158.1 239.9L1158.5 202.4L1158.8 188.8L1159.1 261.7L1159.4 196.7L1159.8 212.8L1160.1 206.6L1160.4 203L1160.7 208.5L1161 219.4L1161.4 191.5L1161.7 218.6L1162 183.6L1162.3 187L1162.7 197.3L1163 199.7L1163.3 205.9L1163.6 202.5L1163.9 243.9L1164.2 225.4L1164.6 212.8L1164.9 235.2L1165.2 226.9L1165.5 202.6L1165.8 221.1L1166.2 231.6L1166.5 215.1L1166.8 231.8L1167.1 221.4L1167.4 259.8L1167.7 197.7L1168 312L1168.4 284.9L1168.7 214.9L1169 255.3L1169.3 187.1L1169.6 231.3L1169.9 201.4L1170.2 235.1L1170.6 212.4L1170.9 219.8L1171.2 202.8L1171.5 204L1171.8 253L1172.1 229.7L1172.4 229.3L1172.7 196L1173.1 209.4L1173.4 288L1173.7 204.7L1174 226.2L1174.3 238.3L1174.6 225.7L1174.9 229.1L1175.2 293.3L1175.5 249.2L1175.8 211.7L1176.1 224.4L1176.5 224.5L1176.8 242.9L1177.1 242.9L1177.4 217L1177.7 245.8L1178 228.9L1178.3 193.3L1178.6 221.9L1178.9 227.9L1179.2 217L1179.5 248.4L1179.8 333.7L1180.1 286.8L1180.4 247.5L1180.7 271.7L1181 239.8L1181.3 246.6L1181.6 280.7L1182 448L1182.2 235L1182.5 236.5L1182.9 235.2L1183.2 241.1L1183.5 214.3L1183.8 259.3L1184.1 306.4L1184.4 232L1184.7 229.3L1185 239.8L1185.3 274.3L1185.6 234.4L1185.9 273L1186.2 232.2L1186.5 259.8L1186.8 270.5L1187.1 267.2L1187.4 227.5L1187.7 315.5L1187.9 288.2L1188.2 257.1L1188.5 291.5L1188.8 266.4L1189.1 239.6L1189.4 255.2L1189.7 289L1190 260.7L1190.3 229.5L1190.6 243.2L1190.9 245.5L1191.2 271.5L1191.5 276.4L1191.8 264.4L1192.1 262.5L1192.4 331.1L1192.7 260.4L1193 282.4L1193.3 253L1193.6 273L1193.8 252.7L1194.1 248L1194.4 264.6L1194.7 249.7L1195 268.8L1195.3 287.6L1195.6 281.6L1195.9 303.5L1196.2 279.6L1196.5 253.8L1196.8 300.2L1197 368L1197.3 305.1L1197.6 358.5L1197.9 290.2L1198.2 274.7L1198.5 282.8L1198.8 292.4L1199.1 282.9L1199.4 268.3L1199.6 290.2L1199.9 308.2L1200.2 324.9L1200.5 319.8L1200.8 337.9L1201.1 326.5L1201.4 298L1201.7 314.2L1201.9 273.4L1202.2 330.2L1202.5 322.8L1202.8 294.7L1203.1 308.5L1203.4 297.4L1203.6 336.1L1204 346L1204.2 336.7L1204.5 362.2L1204.8 338.6L1205.1 310.3L1205.3 306.1L1205.6 367.5L1205.9 353.1L1206.2 290.5L1206.5 299.8L1206.8 329L1207 323.7L1207.3 289.2L1207.6 297.3L1207.9 360.1" fill="none" stroke="#2f86b0" stroke-width="2.2" stroke-linejoin="round" stroke-linecap="round"/>
<path d="M41.2 481.0C43.9 480.3 52.9 477.6 57.5 476.5C62.1 475.4 66.8 474.7 70.0 474.3C73.2 473.9 75.1 473.6 77.5 473.8C79.9 473.9 82.6 474.4 85.0 475.0C87.4 475.6 90.1 476.3 92.5 477.2C94.9 478.2 97.6 479.5 100.0 481.0C102.4 482.5 105.1 483.6 107.5 486.8C109.9 489.9 112.6 495.5 115.0 500.5C117.4 505.5 120.7 514.2 122.5 518.0C124.3 521.8 124.9 523.0 126.0 524.5C127.1 526.0 128.3 527.3 129.2 527.5C130.2 527.7 131.1 526.6 132.0 525.5C132.9 524.4 133.5 524.9 135.0 520.5C136.5 516.1 139.2 505.6 141.2 498.0C143.2 490.4 145.9 478.3 147.5 473.0C149.1 467.7 149.9 466.8 151.0 465.0C152.1 463.2 153.1 462.0 154.5 461.8C155.9 461.5 158.3 462.9 160.0 463.5C161.7 464.1 163.7 465.7 165.0 465.5C166.3 465.3 166.8 463.9 168.0 462.0C169.2 460.1 170.6 457.3 172.5 453.5C174.4 449.7 177.8 441.3 180.0 438.5C182.2 435.7 184.7 436.1 186.2 436.0C187.8 435.9 189.0 437.0 190.0 438.0C191.0 439.0 191.7 439.9 192.5 442.2C193.3 444.6 194.2 448.5 195.0 453.0C195.8 457.5 196.5 459.3 197.5 470.5C198.5 481.7 200.1 507.4 201.2 523.0C202.4 538.6 204.1 558.4 205.0 568.0C205.9 577.6 206.5 580.0 207.0 583.0C207.5 586.0 207.6 586.8 208.0 586.8C208.4 586.8 209.0 585.2 209.5 583.0C210.0 580.8 210.4 581.4 211.2 573.0C212.1 564.6 213.9 541.1 215.0 530.5C216.1 519.9 217.1 511.4 218.0 506.8C218.9 502.1 219.5 501.4 220.5 501.8C221.5 502.1 223.1 507.0 224.2 509.2C225.4 511.5 226.6 515.4 227.5 516.0C228.4 516.6 229.0 517.1 230.0 513.0C231.0 508.9 232.7 496.6 233.8 490.5C234.8 484.4 235.8 478.1 236.5 475.0C237.2 471.9 237.4 471.2 238.0 471.2C238.6 471.2 239.4 473.1 240.0 475.0C240.6 476.9 241.2 479.6 242.0 483.0C242.8 486.4 244.3 493.4 245.0 496.0C245.7 498.6 245.8 499.6 246.2 499.2C246.7 498.9 247.4 497.4 248.0 494.0C248.6 490.6 249.1 487.3 250.0 478.0C250.9 468.7 252.8 443.9 253.8 436.0C254.7 428.1 255.4 430.0 256.0 428.5C256.6 427.0 256.9 426.7 257.5 426.8C258.1 426.8 258.7 427.5 259.5 429.0C260.3 430.5 261.2 432.1 262.5 436.0C263.8 439.9 266.3 449.8 267.5 453.5C268.7 457.2 269.2 458.0 270.0 459.2C270.8 460.5 271.7 460.9 272.5 461.5C273.3 462.1 274.4 462.5 275.0 463.2C275.6 463.9 276.0 463.6 276.5 466.0C277.0 468.4 277.2 469.7 278.0 478.0C278.8 486.3 280.3 507.6 281.2 518.0C282.2 528.4 282.9 540.0 283.8 543.0C284.6 546.0 285.9 538.7 286.8 536.8C287.6 534.8 288.3 530.6 289.2 531.0C290.2 531.4 291.6 537.6 292.5 539.2C293.4 540.9 294.2 543.6 295.0 541.0C295.8 538.4 296.7 531.5 297.5 523.0C298.3 514.5 299.0 498.8 300.0 488.0C301.0 477.2 302.8 462.1 303.8 455.5C304.8 448.9 305.5 447.4 306.2 446.5C307.0 445.6 307.7 448.4 308.5 450.0C309.3 451.6 310.5 455.8 311.2 456.5C312.0 457.2 312.4 455.0 313.0 454.5C313.6 454.0 314.3 452.5 315.0 453.5C315.7 454.5 316.7 454.1 317.5 461.0C318.3 467.9 319.2 491.2 320.0 496.5C320.8 501.8 321.5 498.0 322.5 494.0C323.5 490.0 325.1 475.8 326.2 471.5C327.4 467.2 328.8 464.0 330.0 467.0C331.2 470.0 332.4 491.7 333.8 490.2C335.1 488.8 337.4 458.1 338.8 457.8C340.1 457.4 341.3 487.9 342.5 487.8C343.7 487.6 345.0 465.7 346.2 456.5C347.5 447.3 349.1 432.2 350.5 430.2C351.9 428.2 353.5 440.1 355.0 444.0C356.5 447.9 358.8 455.1 360.0 454.8C361.2 454.4 361.7 447.4 362.5 441.5C363.3 435.6 363.8 422.4 365.0 417.8C366.2 413.1 368.6 415.8 370.0 412.8C371.4 409.8 372.8 403.6 373.8 399.0C374.8 394.4 375.4 391.0 376.2 384.0C377.1 377.0 378.2 366.0 379.0 355.0C379.8 344.0 380.8 327.0 381.5 315.0C382.2 303.0 382.9 287.3 383.5 280.0C384.1 272.7 384.5 269.2 385.0 269.2C385.5 269.2 385.9 272.7 386.5 280.0C387.1 287.3 387.8 301.9 388.5 315.0C389.2 328.1 390.4 351.0 391.0 362.0C391.6 373.0 391.7 376.9 392.5 384.0C393.3 391.1 395.1 401.3 396.2 406.5C397.4 411.7 398.8 411.3 400.0 416.5C401.2 421.7 402.6 433.2 403.8 439.0C404.9 444.8 405.9 449.6 407.5 452.8C409.1 455.9 412.4 457.4 413.8 459.0C415.1 460.6 415.6 460.6 416.2 462.8C416.9 464.9 417.4 471.9 418.0 472.8C418.6 473.6 419.3 464.1 420.0 467.8C420.7 471.4 421.7 492.9 422.5 495.2C423.3 497.6 424.3 484.1 425.0 482.8C425.7 481.4 426.5 472.7 427.0 486.5C427.5 500.3 427.7 554.9 428.0 569.0C428.3 583.1 428.6 584.1 429.0 574.5C429.4 564.9 429.9 521.9 430.5 509.0C431.1 496.1 431.9 494.8 432.5 494.0C433.1 493.2 433.9 505.4 434.5 504.0C435.1 502.6 435.8 485.2 436.5 485.2C437.2 485.2 438.0 497.4 438.8 504.0C439.5 510.6 440.4 530.9 441.2 526.5C442.1 522.1 443.0 484.5 443.8 476.5C444.5 468.5 445.1 473.9 445.8 476.5C446.4 479.1 447.0 491.4 447.5 492.8C448.0 494.1 448.3 471.6 448.8 485.2C449.2 498.9 449.9 571.4 450.5 577.8C451.1 584.1 451.8 534.6 452.5 525.2C453.2 515.9 454.2 523.2 455.0 519.0C455.8 514.8 456.7 500.4 457.5 499.0C458.3 497.6 459.1 513.0 460.0 510.2C460.9 507.4 462.2 480.9 463.0 481.5C463.8 482.1 464.4 513.6 465.0 514.0C465.6 514.4 466.2 492.0 467.0 484.0C467.8 476.0 469.3 474.2 470.0 464.0C470.7 453.8 470.9 440.0 471.3 420.0C471.7 400.0 472.1 339.2 472.5 339.2C472.9 339.2 473.2 395.2 473.7 420.0C474.2 444.8 474.8 480.2 475.5 494.0C476.2 507.8 477.2 499.7 478.0 506.5C478.8 513.3 479.9 536.9 480.5 536.5C481.1 536.1 481.4 498.8 482.0 504.0C482.6 509.2 483.6 565.0 484.2 569.0C484.9 573.0 485.6 537.8 486.2 529.0C486.9 520.2 487.4 504.8 488.0 514.0C488.6 523.2 489.3 586.1 490.0 586.5C490.7 586.9 491.8 516.1 492.5 516.5C493.2 516.9 493.9 585.8 494.5 589.0C495.1 592.2 495.7 546.9 496.2 536.5C496.8 526.1 497.4 524.0 498.0 524.0C498.6 524.0 499.4 538.3 500.0 536.5C500.6 534.7 501.5 489.0 502.0 512.8C502.5 536.5 502.8 679.6 503.2 685.0C503.7 690.4 504.4 563.5 505.0 546.5C505.6 529.5 506.4 584.0 507.0 579.0C507.6 574.0 508.1 520.5 508.8 515.2C509.4 510.1 510.4 532.9 511.2 546.5C512.0 560.1 513.1 597.0 513.8 600.2C514.4 603.5 514.9 567.9 515.5 566.5C516.1 565.1 516.8 596.7 517.5 591.5C518.2 586.3 519.2 551.2 520.0 534.0C520.8 516.8 522.0 502.2 522.5 484.0C523.0 465.8 523.0 438.6 523.2 420.0C523.4 401.4 523.6 368.0 523.8 368.0C523.9 368.0 524.0 399.4 524.4 420.0C524.8 440.6 525.7 480.7 526.2 496.5C526.8 512.3 527.4 507.8 528.0 519.0C528.6 530.2 529.5 564.9 530.0 566.5C530.5 568.1 530.9 526.4 531.2 529.0C531.6 531.6 532.3 574.1 532.5 582.8L533.6 568.9L534.5 550.9L535.3 577.7L536.2 524.5L537.1 558.8L537.9 551.9L538.7 526.6L539.6 565.8L540.4 521.6L541.2 556.4L542.1 525.8L542.9 533.8L543.7 567.7L544.5 600.6L545.3 541.9L546.1 544.6L546.9 566.6L547.7 610.6L548.4 566.6L549.2 560.3L550 636.9L550.7 527.1L551.5 595.9L552.3 552.5L553 545.3L553.8 550.2L554.5 573.1L555.2 611.5L556 559.7L556.7 581.5L557.4 580.8L558.2 563.2L558.9 574.4L559.6 536L560.3 533.9L561 546.1L560.3 566.5L561 528L561.7 566.5L561.7 573.8L562.4 555.3L563.1 550L563.8 573.4L564.5 573.4L565.2 569.6L565.8 607.9L566.5 598.4L567.2 566.1L567.8 587.9L568.5 587.3L569.2 623.7L569.8 609.6L570.5 580.7L571.1 664.8L571.8 558.2L572.4 578.1L573.1 599.5L573.7 556.8L574.3 586.2L575 551.1L575.6 607L576.2 616.3L576.9 599.7L577.5 626.5L578.1 579.2L578.7 604.6L579.3 599.5L579.9 601.2L580.5 594.7L581.1 623.6L581.7 641.5L582.3 581.9L582.9 587.8L583.5 535.8L584.1 585.5L584.7 583.1L585.3 671.2L585.8 605.5L586.4 567L587 574.2L587.6 590.8L588.1 533.8L587.5 551.5L588.2 491.5L589 551.5L588.7 578.6L589.3 560.9L589.8 561.5L590.4 559.8L590.9 621.5L591.5 575.8L592.1 585.8L592.6 593.3L593.1 628.6L593.7 558.3L594.2 587.7L594.8 594.1L595.3 628.2L595.8 620.3L596.4 627.4L596.9 579.9L597.4 587L598 580.5L598.5 621.6L599 642.3L599.5 561.4L600.1 567.6L600.6 577.6L601.1 582.5L601.6 603.3L602.1 610.9L602.6 588.6L603.1 545.8L603.6 594.3L604.1 589.4L604.6 600.2L605.1 651.8L605.6 611.9L606.1 602.1L606.6 610L607.1 614.1L607.6 562.6L608.1 636.4L608.6 616L609 626.6L609.5 615.8L610 588.7L610.5 593.2L610.9 573.6L611.4 618.7L611.9 578.2L612.4 582.3L612.8 599.2L613.3 594.8L613.8 608.8L614.2 579.3L614.7 549.3L615.1 592.6L615.6 589L616.1 614.5L616.5 579.8L617 658.8L617.4 631.5L617.9 595.6L618.3 600.5L618.8 602.8L619.2 599L619.7 574L620.1 629.6L620.5 693.7L621 598L621.4 600.9L621.9 571L622.3 574.9L622.7 597.3L623.2 590.9L623.6 632.2L624 579.1L624.4 557L624.9 655.6L625.3 604.1L625.7 578.2L626.1 610L626.6 566.9L627 616L627.4 687.9L627.8 649.8L628.2 630.9L628.6 599.8L629 605.2L629.5 585.5L629.9 626.9L630.3 606.7L630.7 625L631.1 594.3L631.5 587.6L631.9 633.8L632.3 690.2L632.7 644.2L633.1 639.4L633.5 641.3L633.9 632.5L634.3 595.7L634.7 614.7L635.1 604.9L635.5 570.5L635.9 572.1L636.2 604.5L636.6 606.7L637 640.1L637.4 687.5L637.8 631.4L638.2 685.1L638.6 720.3L638.9 692L639.3 626.6L639.7 612.3L640.1 609.9L640.4 604.5L640.8 603L641.2 630.4L641.6 660.9L641.9 651L642.3 622.1L642.7 633.9L643 647.4L643.4 590.4L643.8 632.8L644.1 660.9L644.5 638.7L644.9 632.7L645.2 611L645.6 587.7L646 632.3L646.3 600.9L646.7 636.6L647 681.7L647.4 614.2L647.7 618.6L648.1 680.1L648.5 646.8L648.8 609.4L649.2 606.2L649.5 609L649.9 673.8L650.2 657.2L650.6 606.1L650.9 658.1L651.2 704.4L651.6 642.5L651.9 624.6L652 722L652.3 638.2L652.6 609.5L653 590.3L653.3 705.1L653.6 650.6L654 642L654.3 686.5L654.7 633L655 667.2L655.3 657.4L655.7 608L656 609L656.3 610.7L656.7 605.8L657 629.1L657.3 608.9L657.6 622.3L658 601.6L658.3 672.6L658.6 625.1L658.9 632.8L659.3 641.2L659.6 675.6L659.9 630.8L660 738L660.2 677L660.6 632.7L660.9 633L661.2 631.3L661.5 582.2L661.8 625.5L662.2 606.9L662.5 574.2L662.8 655L662.3 616L663 556L663.7 616L663.1 609.8L663.4 633.1L663.7 651.3L664 639.1L664.4 624.1L664.7 634.4L665 634.3L665.3 649.4L665.6 594L665.9 624.7L666.2 600.8L666.5 600.4L666.8 633.3L667.1 612.3L667.4 615.4L667.7 631.2L668 654.9L668.3 611.8L668.6 624L668.9 619.1L669.4 619.4L669.7 634.5L670.3 620.9L670.6 671.9L671.2 635L671.5 671.8L672 606.3L672.3 676.7L672.9 604.8L673.2 657L673.8 607L674.1 635.4L674.7 611.9L675 669.9L675.5 621.7L675.8 686.1L676.4 615L676.7 674.8L677.2 617.6L677.5 700.5L678 630.5L678.3 724.2L678.9 614.9L679.2 665.8L679.7 618.9L680 774L680 641.7L680.5 589.8L680.8 653.6L681.4 584.2L681.7 637.9L682.2 619.9L682.5 637.6L683 594.2L683.3 710.4L683.8 607.9L684.1 701.4L684.6 602.6L684.9 666.4L685.4 620L685.7 689.2L686.2 618.5L686.5 672.6L686.9 645.4L687.2 685.9L687.7 600.7L688 650.6L688.5 603.8L688.8 688.6L689.3 609L689.6 665L690 607.1L690.3 674.4L690.8 631L691.1 642.4L691.5 605.8L691.8 682.7L692.3 600L692.6 633.8L693 591.7L693.3 610.5L693.8 621.2L694 770L694.1 656.4L694.5 622.2L694.8 642.7L695.2 602.4L695.5 638.4L696 603.7L696.3 669L696.7 630.4L697 698.9L697.4 619.8L697.7 675.2L698.1 643.2L698.4 676.5L698.8 650.3L699.1 727L699.6 643.4L699.9 681.2L700.3 646.1L700.6 664L701 616L701.3 625.2L701.7 619.5L702 666.3L702.3 607.9L702.6 668.9L703 612.9L703.3 644.9L703.7 604L704 626.6L704.4 614.6L704.7 690.4L705.1 617.6L705.4 698.6L705.8 624.6L706.1 697.2L706.4 574.9L706.7 635.2L707.1 614.5L707.4 636.3L707.8 579.1L708.1 618.1L708.4 589.4L708.7 627.9L709.1 619.4L709.4 644.8L709.7 643.2L710 661.7L710.4 644.8L710.7 684.1L711 627.6L711.3 731.2L711.7 612L712 669L712.3 656.2L712.6 686.5L712.9 617.1L713.2 669.9L713.6 642.5L713.9 669.5L714.2 648.2L714.5 668.8L714.8 657.4L715.1 681.1L715.5 606.4L715.8 629.5L716.1 622.1L716.4 681.2L716.7 657.5L717 662.2L717.3 595.6L717.6 665.8L717.9 651.6L718.2 675.2L718.5 615.8L718.8 661.8L719.1 620.3L719.4 669.3L719.8 640L720.1 674.7L720.5 662.2L720.8 733.4L721.3 669.4L721.6 692.8L722 639.6L722.3 683.3L722.8 617.4L723.1 688.9L723.6 628.5L723.9 674.2L724.4 645.9L724.7 671.9L725.2 629.5L725.5 696.1L725.9 612.6L726.2 730.1L726.7 642.9L727 722.4L727.4 634.4L727.7 707.6L728.2 619.7L728.5 703.2L728.9 645.8L729.2 680.7L729.7 602.4L730 683.3L730.4 591.8L730.7 649.7L731.2 629.3L731.5 690.1L731.9 603.1L732.2 694L732.6 653.9L732.9 712.4L733.4 659.9L733.7 796.5L734.1 625.2L734.4 660.6L734.8 633.3L735.1 713.6L735.5 647.1L735.8 668.7L736.2 662.9L736.5 727.2L736.9 676.2L737.2 723.2L737.6 633.1L737.9 688L738.3 624.7L738.6 686.7L739 632.4L739.3 707.4L739.7 639.2L740 724.5L740.4 642.7L740.7 665.4L741 633.5L741.3 700.9L741.7 644L742 773.7L742.4 635L742.7 663.3L743.1 634.9L743.4 657.9L743.7 658.7L744 701.2L744.4 651.8L744.7 663.9L745.1 624.8L745.4 724.1L745.7 645L746 695.6L746.4 649.6L746.7 665.2L747 788L747 624.7L747.3 724.2L747.7 627.8L748 707.6L748.3 598.3L748.6 709.9L748.9 641.2L749.2 725.5L749.6 626.4L749.9 664.8L750.2 660L750.5 701.8L750.8 609.7L751.1 672.5L751.5 633.7L751.8 696.2L752.1 627.9L752.4 672.6L752.7 625.4L753 667.1L753.3 612.1L753.6 669.1L753.9 650.1L754.2 720.1L754.6 644.2L754.9 697.7L755.2 618.9L755.5 721.2L755.8 653.3L756.1 678.4L756.4 634.3L756.7 717.8L757 662.4L757.3 708.1L757.8 668.3L758.1 753.7L758.5 671.4L758.8 716.3L759.3 665.2L759.6 743.4L760 656.1L760.3 736.1L760.7 640.1L761 746.8L761.5 694.6L761.8 794L762.2 637.9L762.5 728.1L762.9 656.9L763 797L763.2 691.7L763.6 622.6L763.9 734.5L764.3 655.5L764.6 737.4L765 631.7L765.3 711.5L765.7 623.9L766 705.1L766.4 627.5L766.7 692.2L767.1 656.4L767.4 715L767.8 662.5L768.1 735.6L768.5 626.8L768.8 726.2L769.2 638L769.5 734.1L769.8 661.9L770.1 737.6L770.5 652.7L770.8 721.8L771.2 661.5L771.5 699.5L771.9 639.2L772.2 694.3L772.5 633.2L772.8 679.1L773.2 644L773.5 760L773.8 645.5L774.1 691.1L774.5 670L774.8 700.5L775.1 640.3L775.4 696.5L775.8 643L776.1 681.7L776.4 637.9L776.7 698.8L777.1 648.4L777.4 757.7L777.7 640.5L778 759.1L778.3 637.3L778.6 718.8L779 677L779.3 748.5L779.6 654.5L779.9 736.8L780.2 656.7L780.5 692.1L780.8 661L781.1 691.9L781.5 631.4L781.8 693.4L782.1 646.8L782.4 705.1L782.7 653.7L783 694.5L783.3 673.9L783.6 743.4L783.9 676.8L784.2 719.7L784.5 662.9L784.8 796.4L785.2 628.4L785.5 720.3L785.9 623.1L786.2 708.7L786.6 634.1L786.9 673.6L787.3 632.5L787.6 725.4L788 628.4L788.3 733.7L788.7 645.3L789 712.4L789.4 648.9L789.7 700.6L790.1 642.2L790.4 672.3L790.8 627.5L791.1 707.9L791.5 639.3L791.8 696.7L792.2 664.7L792.5 681.4L792.8 628.2L793.1 699.8L793.5 652.9L793.8 681.3L794.2 647.7L794.5 697.7L794.9 651.7L795.2 710.5L795.5 661.1L795.8 793.5L796.2 656.8L796.5 758.5L796.8 643.2L797.1 726.3L797.5 651.4L797.8 721.6L798.1 638.9L798.4 679.7L798.8 657L799.1 730.6L799.4 655.7L799.7 720.2L800 886L800.1 656.5L800.4 781.2L800.7 670.6L801 773.7L801.3 643.8L801.6 708.2L802 621.8L802.3 759.1L802.6 639.9L802.9 722.3L803.2 630.5L803.5 696.9L803.8 660.2L804.1 700.1L804.5 670.4L804.8 746.7L805.1 667.8L805.4 733L805.7 649L806 708L806.3 651.4L806.6 743.7L806.9 635.8L807.2 707.3L807.5 656.4L807.8 733.6L808.2 639.7L808.5 715.1L808.9 624.7L809.2 707.3L809.6 637L809.9 695.7L810.2 660.8L810.5 706.2L810.9 620.5L811.2 732.5L811.6 648.9L811.9 716.3L812.3 643L812.6 729.5L813 646L813.3 688.2L813.6 617.9L813.9 701.6L814.3 622.8L814.6 709.7L815 635.7L815.3 700L815.6 639.3L815.9 727.4L816.3 634.3L816.6 705.8L816.9 643L817.2 693L817.6 626.9L817.9 732.2L818.2 629.1L818.5 701.9L818.9 642.7L819.2 706.3L819.5 615.1L819.8 748.2L820.2 656.7L820.5 706.6L820.8 647.3L821.1 730.1L821.4 642.4L821.7 697.4L822.1 622.8L822.4 706.3L822.7 645.2L823 704.4L823.3 637L823.6 691.2L823.9 637.3L824.2 684.7L824.5 646.5L824.8 702.5L825.2 646.1L825.5 675.7L825.8 646.7L826.1 744.8L826.4 648.9L826.7 755.9L827 636.7L827.3 700.9L827.6 651.1L827.9 717.6L828.3 658.7L828.6 712.4L829 650.1L828.3 635L829 575L829.7 635L829.3 708.7L829.7 668.2L830 704.2L830.3 666.9L830.6 759.6L831 650.8L831.3 742.7L831.7 684.6L832 742.3L832.3 646.3L832.6 764.1L833 632.8L833.3 694.2L833.6 658.1L833.9 729.1L834.3 650.3L834.6 742.3L834.9 656.6L835.2 708.8L835.6 667L835.9 717.6L836 872L836.2 631.6L836.5 706.3L836.9 654.9L837.2 740L837.5 641.8L837.8 748.3L838.1 660.6L838.4 733.4L838.8 668.3L839.1 733.4L839.4 674.3L839.7 736.4L840 667.2L840.3 708.5L840.6 657.4L840.9 745L841.3 674.4L841.6 778.5L841.9 675.7L842.2 797.7L842.5 707.2L842.8 750.5L843.1 693.9L843.4 740.3L843.7 693.6L844 780.6L844.3 663.6L844.6 742.9L844.9 650.1L845.2 751.6L845.6 685.3L845.9 719.8L846.3 664.1L846.6 751.4L846.9 688.3L847.2 754.2L847.6 648.1L847.9 745.6L848.3 661.7L848.6 775L848.9 635.3L849.2 757.8L849.6 641.9L849.9 724.7L850.2 657.9L850.5 761.4L850.8 645.1L851.1 735.4L851.5 663.9L851.8 729.5L852.1 690.7L852.4 762.1L852.8 667.1L853.1 781.1L853.4 683.6L853.7 741.7L854 637L854.3 736.7L854.6 660.6L854.9 741.6L855.3 673.1L855.6 748L855.9 664L856 862L856.2 725.2L856.5 676.2L856.8 742L857.1 658.6L857.4 826.9L857.7 648.9L858 722.9L858.3 676.2L858.6 794.8L858.9 646.8L859.2 758.5L859.6 649.2L859.9 752.7L860.2 662.9L860.5 793.9L860.9 648.5L861.2 738.8L861.5 659.2L861.8 788.5L862.2 656.7L862.5 725.3L862.9 665.4L863.2 764L863.5 680.5L863.8 762.4L864.1 669.1L864.4 745.8L864.8 667.9L865.1 789.9L865.4 676.4L865.7 850.5L866.1 662.5L866.4 795.1L866.7 652.1L867 763.4L867.3 680.2L867.6 739.1L867.9 672.4L868.2 743.6L868.6 658.4L868.9 756.1L869.2 643.6L869.5 736.3L869.8 655.5L870.1 759L870.4 644.2L870.7 766.4L871 643.4L871.3 721.9L871.6 653.1L871.9 733.2L872.2 668.1L872.5 758L872.9 681.4L873.2 790.1L873.5 660.8L873.8 769.4L874.2 651.2L874.5 776.3L874.8 654.2L875.1 752.6L875.5 669.6L875.8 769.5L876.1 672.4L876.4 705.1L876.8 687.8L877.1 742.8L877.4 665.1L877.7 756.4L878 681.1L878.3 820.4L878.7 687.2L879 790.2L879.3 682.7L879.6 765.3L879.9 654.2L880.2 784.2L880.5 691.9L880.8 743.4L881.2 672L881.5 761.2L881.8 656L882.1 779.4L882.4 701.3L882.7 865.3L883 679.4L883.3 789.6L883.6 680.2L883.9 847.3L884.2 683.4L884.5 821.7L884.8 647.9L885.1 830.2L885.4 682.1L885.7 848.2L886.1 669.1L886.4 740.1L886.7 656.5L887 761.9L887.4 673.8L887.7 789.2L888 699.7L888.3 794.3L888.6 689.1L888.9 805L889.3 672.7L889.6 753.2L889.9 680.2L890 950L890.2 749.3L890.5 676.8L890.8 783.4L891.2 672.8L891.5 747.1L891.8 667L892.1 741.2L892.4 664.1L892.7 755.7L893 657.2L893.3 743.9L893.6 657.7L893.9 756.2L894.2 656.1L894.5 735.1L894.8 630.1L895.1 732.9L895.4 652.2L895.7 755.4L896.1 643.3L896.4 746L896.7 648.2L897 771L897.4 660L897.7 756.9L898 669.5L898.3 737.2L898.6 654.5L898.9 723.2L899 884L899.3 654.8L899.6 830.4L899.9 662.9L900.2 773.8L900.5 682.2L900.8 769.7L901.2 664.7L901.5 777.1L901.8 649.7L902.1 795.4L902.4 687.4L902.7 767.6L903 680.4L903.3 809.2L903.6 678.9L903.9 793.5L904.2 672.9L904.5 735.6L904.8 680.9L905.1 767.1L905.5 673.1L905.8 828.6L906.1 652.1L906.4 785.2L906.7 675.2L907 760.8L907.4 660.3L907.7 775.2L908 658.2L908.3 766.6L908.6 659.7L908.9 784.4L909.3 668.2L909.6 760.8L909.9 657.5L910.2 766.6L910.5 666.9L910.8 839.9L911.1 693.6L911.4 778.7L911.8 670.1L912.1 826.6L912.4 654.8L912.7 780.9L913 677.4L913.3 829.5L913.6 669.8L913.9 764.5L914.2 684.1L914.5 804L914.8 677.8L915.1 746.4L915.4 666.7L915.7 832.3L916.1 691L916.4 805.2L916.7 651L917 823.9L917.3 655.5L917.6 806.8L918 664.1L918.3 757.7L918.6 682.9L918.9 845L919 893L919.2 680.3L919.5 761.6L919.9 657.7L920.2 852L920.5 666.1L920.8 812.5L921.1 661.5L921.4 834.5L921.7 677.4L922 797.6L922.3 658.2L922.6 818.4L922.9 659.7L923.2 890.5L923.5 660L923.8 816.8L924.1 707.3L924.4 868.1L924.8 704.6L925.1 798L925.4 691.1L925.7 786.8L926 922L926 696.2L926.3 887.5L926.7 676.8L927 762.7L927.3 678.6L927.6 766.9L927.9 670.8L928.2 810.4L928.5 675L928.8 769.8L929.2 678.5L929.5 754.7L929.8 662.2L930.1 889.2L930.4 675.3L930.7 763.2L931 672.2L931.3 775.2L931.6 665.7L931.9 776.8L932.2 668.4L932.5 778.6L932.8 658.9L933.1 760.9L933.5 658.2L933.8 805.6L934.1 674.8L934.4 857L934.7 668.5L935 802.5L935.3 674.1L935.6 749.8L936 685.4L936.3 791L936.6 667L936.9 789.8L937.2 670.7L937.5 821.7L937.8 660.4L938.1 784.1L938.4 684.3L938.7 874.8L939 680.6L939.3 803.1L939.6 687.8L939.9 809.4L940.2 664.2L940.5 793.4L940.9 672L941.2 763.1L941.5 677L941.8 836.3L942.1 646.7L942.4 788.6L942.7 671.8L943 809.8L943.4 667.7L943.7 790.5L944 691.1L944.3 816L944.6 682L944.9 812.2L945.2 694.1L945.5 813.9L945.8 691.8L946.1 806.3L946.4 704.1L946.7 825.6L947 931L947 698.1L947.3 792.6L947.6 697L947.9 790.7L948.3 676.3L948.6 832.1L948.9 693.2L949.2 779L949.5 693L949.8 890.1L950.1 713.1L950.4 774.1L950.8 699L951.1 879.1L951.4 714.5L951.7 874.3L952 686.7L952.3 849.1L952.6 696.8L952.9 792.9L953.2 690.9L953.5 787.7L953.8 683.7L954.1 844.6L954.4 667.2L954.7 822.8L955 675.5L955.3 770.2L955.7 679.1L956 836.4L956.3 690.4L956.6 808.8L956.9 686.7L957.2 876.3L957.5 701.3L957.8 822L958.1 681.7L958.4 856.7L958.8 683.3L959.1 826.8L959.4 692.9L959.7 805.4L960 686.8L960.3 851.9L960.6 716.2L960.9 799.5L961.2 706.9L961.5 824.3L961.8 716.4L962.1 840.2L962.5 699.1L962.8 863.9L963.1 692.9L963.4 823.9L963.7 693.9L964 960L964.3 669.6L964.6 824.9L964.9 692L965.2 831.6L965.5 707L965.8 829.4L966.1 692L966.4 831.8L966.7 702.5L967 819.6L967.3 692.7L967.6 834.2L968 683.5L968.3 859.5L968.6 697.3L968.9 805.1L969.2 693.2L969.5 772.6L969.8 702.3L970.1 824.6L970.4 701.7L970.7 811.8L971 707.4L971.3 858.1L971.6 712.8L971.9 840.6L972.2 721.3L972.5 849.5L972.9 698.2L973.2 880.7L973.5 714.9L973.8 874.1L974.1 700.7L974.4 814.2L974.7 693.6L975 819.8L975.3 694.9L975.6 822.7L976 712L976.3 960L976.6 693.7L976.9 822.2L977.2 684.1L977.5 804.5L977.8 698.2L978.1 905.7L978.4 695L978.7 830.2L979 674.1L979.3 806L979.6 681L979.9 795L980.3 681.4L980.6 807.8L980.9 688.3L981.2 843.6L981.5 699.8L981.8 887.6L982.1 691.4L982.4 836.4L982.7 718.9L983 882.3L983.3 720.1L983.6 928.4L983.9 710.4L984.2 877.1L984.5 710.7L984.8 850.5L985.2 722.3L985.5 843.5L985.8 714.8L986.1 868L986.4 703.9L986.7 899.6L987 713L987.3 876.6L987.6 739.4L987.9 910.4L988.2 716.6L988.5 829.8L988.8 718.1L989.1 833.3L989.4 696.9L989.7 896.2L990 709.1L990.3 852.3L990.7 692.1L991 909.2L991.3 729.5L991.6 846.1L991.9 735.5L992.2 822.7L992.5 715.2L992.8 860.7L993.1 709.6L993.4 827.2L993.7 713.4L994 878.2L994.3 716.1L994.6 895.9L994.9 696.1L995.2 866.6L995.5 712.3L995.8 844.4L996.2 730.2L996.5 802.5L996.8 714.7L997.1 860.5L997.4 719.7L997.7 894.5L998 721.7L998.3 851.5L998.6 702.8L998.9 831L999.2 707.9L999.5 842.5L999.8 711.8L1000.1 802.1L1000.4 696L1000.7 903.5L1001 696.7L1001.3 852.5L1001.6 700.7L1001.9 842.9L1002.2 709.3L1002.5 844.8L1002.8 704.8L1003.1 820.7L1003.5 717.5L1003.8 831.9L1004.1 711.7L1004.4 925.1L1004.7 729L1005 890.1L1005.3 684.6L1005.6 839.1L1005.9 705.8L1006.2 880.1L1006.5 723.9L1006.8 840.5L1007.1 714.3L1007.4 927.3L1007.7 717.9L1008 891.6L1008.4 722.9L1008.7 909.7L1009 722.9L1009.3 855.5L1009.6 703.3L1009.9 842.2L1010.2 729.1L1010.5 882.4L1010.8 714.6L1011.1 813.5L1011.4 724.2L1011.7 887.6L1012 709.7L1012.3 888L1012.6 717.1L1012.9 868.7L1013.2 712.7L1013.5 822L1013.9 699.9L1014.2 873L1014.5 683.5L1014.8 784.8L1015.1 691.9L1015.4 828.6L1015.7 695.9L1016 807.9L1016.3 697.2L1016.6 851.9L1016.9 696.5L1017.2 844.5L1017.5 689.8L1017.8 923.8L1018.1 704.3L1018.4 879.7L1018.7 724.8L1019 862.1L1019.3 708.7L1019.6 856.6L1019.9 719.4L1020.2 875.9L1020.6 711.8L1020.9 816.1L1021.2 692.9L1021.5 859.2L1021.8 712L1022.1 865.8L1022.4 709.1L1022.7 872.4L1023 725.9L1023.3 832.2L1023.6 728.9L1023.9 817.2L1024.2 709.9L1024.5 853.8L1024.8 705.2L1025.1 905L1025.4 707.9L1025.7 875.4L1026 696.4L1026.3 869L1026.7 702.3L1027 944.1L1027.3 695.5L1027.6 927.2L1027.9 699.8L1028.2 879L1028.5 729.1L1028.8 960L1029.1 705.4L1029.4 902.9L1029.7 714.2L1030 878.1L1030.3 710.3L1030.6 943.1L1030.9 729.5L1031.2 841.1L1031.5 702.6L1031.8 878.8L1032.1 718.9L1032.4 842.4L1032.8 725L1033.1 896.3L1033.4 726.6L1033.7 960L1034 719.1L1034.3 872.4L1034.6 733.6L1034.9 886.2L1035.2 714.4L1035.5 887.8L1035.8 719L1036.1 914.9L1036.4 699L1036.7 856.5L1037 701.9L1037.3 874.6L1037.6 686.5L1037.9 821.4L1038.2 694L1038.5 832.5L1038.8 710.8L1039.1 866.7L1039.4 705.3L1039.7 909.8L1039.3 705L1040 645L1040.7 705L1040.1 698.6L1040.4 850.6L1040.7 711.3L1041 896.4L1041.3 705.1L1041.6 835.6L1041.9 712.6L1042.2 817.3L1042.5 702.3L1042.8 853.2L1043.1 707.8L1043.4 829.1L1043.7 706.2L1044 891.7L1044.3 711.9L1044.6 844.7L1044.9 714.2L1045.2 856.3L1045.5 726.4L1045.8 882.5L1046.1 707.2L1046.4 854.1L1046.7 701.3L1047 827.2L1047.3 696.4L1047.6 901.4L1047.9 693.1L1048.2 836.9L1048.6 712.6L1048.9 888.9L1049.2 702.1L1049.5 892.5L1049.8 697.1L1050.1 932.9L1050.4 698.5L1050.7 846.8L1051 705.6L1051.3 863.4L1051.6 694.3L1051.9 834.5L1052.2 692.5L1052.5 906.4L1052.8 671.8L1053.1 960L1053.4 695.4L1053.7 844.5L1054 708.7L1054.3 896.7L1054.6 703.2L1054.9 903.9L1055.2 709.7L1055.5 927.1L1055.9 702.9L1056.2 861.9L1056.5 695.7L1056.8 910.2L1057.1 703L1057.4 859.5L1057.7 690.2L1058 860.5L1058.3 684.3L1058.6 931.9L1058.9 675.6L1059.2 888L1059.5 688.9L1059.8 922.1L1060.1 687.6L1060.4 876.4L1060.7 691.8L1061 842.2L1061.3 703.5L1061.6 834.2L1061.9 684.7L1062.2 850.4L1062.5 681.3L1062.8 825.8L1063.1 685.1L1063.4 849L1063.7 686.3L1064 890.2L1064.4 696.9L1064.7 926L1065 685.1L1065.3 934.6L1065.6 704.9L1065.9 907.1L1066.2 705.5L1066.5 883.6L1066.8 705.1L1067.1 821.6L1067.4 695.6L1067.7 872.4L1068 713L1068.3 951.7L1068.6 691.4L1068.9 895.5L1069.2 707.7L1069.5 878.3L1069.8 722.2L1070.1 864.4L1070.4 719.1L1070.7 891.9L1071 714.6L1071.3 901.1L1071.6 717.8L1071.9 860.8L1072.2 706L1072.5 904.6L1072.9 699.3L1073.2 819.1L1073.5 694.2L1073.8 822.7L1074.1 678.9L1074.4 843.1L1074.7 680.2L1075 835.1L1075.3 687.4L1075.6 881.7L1075.9 691.6L1076.2 871.3L1076.5 688L1076.8 942.1L1077.1 700L1077.4 826.6L1077.7 689.7L1078 921.2L1078.3 698.4L1078.6 862.4L1078.9 698.4L1079.2 868.7L1079.5 688.8L1079.8 857.5L1080.1 687L1080.4 879.8L1080.7 679.9L1081 853.9L1081.3 692.7L1081.6 852.8L1081.9 692.5L1082.2 893.5L1082.5 676.6L1082.8 900.8L1083.1 685.1L1083.4 821.3L1083.7 684.2L1084 862.4L1084.4 684.7L1084.7 837.9L1085 681.6L1085.3 854.6L1085.6 677.4L1085.9 834.4L1086.2 682.1L1086.5 909.2L1086.8 690L1087.1 916.4L1087.4 699.5L1087.7 852.2L1088 688.9L1088.3 836.1L1088.6 670.2L1088.9 907.5L1089.2 690.1L1089.5 898L1089.8 685.9L1090.1 865.9L1090.4 696.1L1090.7 865.9L1091 697.1L1091.3 883.4L1091.6 702.7L1091.9 941.5L1092.2 708.5L1092.5 847.7L1092.8 708.7L1093.1 960L1093.4 708.1L1093.7 878.9L1094 690.6L1094.3 896.9L1094.6 698.7L1094.9 881.7L1095.3 693.4L1095.6 907.1L1095.9 694.6L1096.2 908.8L1096.5 692.7L1096.8 937.2L1097.1 696.7L1097.4 877.7L1097.7 700.8L1098 890.3L1098.3 689.8L1098.6 912.2L1098.9 685.8L1099.2 888.4L1099.5 683.6L1099.8 888.1L1100.1 684.5L1100.4 860L1100.7 687.6L1101 948L1101.3 693.4L1101.6 861.3L1101.9 711.3L1102.2 921.8L1102.5 697.5L1102.8 879.1L1103.1 711L1103.4 911.1L1103.7 711L1104 888.4L1104.3 718.8L1104.6 908.2L1104.9 710.6L1105.2 854.6L1105.5 722.2L1105.8 960L1106.1 728.7L1106.4 876.7L1106.8 733.2L1107.1 935.6L1107.4 745.2L1107.7 954.6L1108 729.4L1108.3 940.1L1108.6 726.6L1108.9 885.9L1109.2 729.2L1109.5 955.7L1109.8 698.7L1110.1 916.2L1110.4 733.9L1110.7 960L1111 713.8L1111.3 863.7L1111.6 726.1L1111.9 924.2L1112.2 745.4L1112.5 906.1L1112.8 744.9L1113.1 885.7L1113.4 750.9L1113.7 896L1114 745.9L1114.3 960L1114.6 726.7L1114.9 960L1115.2 737.6L1115.5 918.2L1115.8 738.4L1116.1 960L1116.4 735L1116.7 921.3L1117 732L1117.3 885L1117.6 728.7L1117.9 960L1118.2 721L1118.5 879L1118.8 718.1L1119.1 960L1119.5 707.1L1119.8 865.3L1120.1 698.1L1120.4 902L1120.7 699.1L1121 866.3L1121.3 689L1121.6 880.6L1121.9 693L1122.2 865.7L1122.5 688.7L1122.8 912.6L1123.1 709.7L1123.4 838.8L1123.7 698L1124 908.1L1124.3 701.6L1124.6 887.8L1124.9 692.1L1125.2 960L1125.5 689.6L1125.8 888.3L1126.1 700.6L1126.4 875.6L1126.7 689.3L1127 875.7L1127.3 701.2L1127.6 911.8L1127.9 707.5L1128.2 908.7L1128.5 705.4L1128.8 890.3L1129.1 704.3L1129.4 881.1L1129.7 708.7L1130 931.7L1130.3 702.6L1130.6 960L1130.9 704.8L1131.2 882.1L1131.5 700.4L1131.8 941.5L1132.1 692.7L1132.4 852.4L1132.7 694.8L1133 896.1L1133.3 701.2L1133.6 870.1L1134 695.4L1134.3 840.1L1134.6 692.8L1134.9 889.1L1135.2 685.1L1135.5 860.2L1135.8 685.3L1136.1 825L1136.4 685.8L1136.7 862.1L1137 687.4L1137.3 854.9L1137.6 694L1137.9 904.8L1138.2 704.5L1138.5 960L1138.8 691.5L1139.1 922.7L1139.4 701.9L1139.7 956.6L1140 688.1L1140.3 874.8L1140.6 684.4L1140.9 879.9L1141.2 698.5L1141.5 915.2L1141.8 688.3L1142.1 846.7L1142.4 697.8L1142.7 899.8L1143 699.7L1143.3 902.6L1143.6 713.7L1143.9 923.7L1144.2 698.6L1144.5 938.2L1144.8 702.2L1145.1 960L1145.4 704.3L1145.7 889.2L1146 686.2L1146.3 890.1L1146.6 689.8L1146.9 885.7L1147.2 697.4L1147.5 901.8L1147.8 702.7L1148.1 900.4L1148.4 717.6L1148.7 900.4L1149 732.1L1149.3 908.5L1149.6 714.6L1149.9 912.3L1150.3 727.2L1150.6 952.8L1150.9 720.9L1151.2 907.4L1151.5 723.3L1151.8 881.8L1152.1 710.6L1152.4 937.5L1152.7 732L1153 960L1153.3 721.4L1153.6 960L1153.9 736.5L1154.2 958.6L1154.5 744.1L1154.8 960L1155.1 732.8L1155.4 940.9L1155.7 743.5L1156 960L1156.3 735.3L1156.6 914.3L1156.9 718.1L1157.2 914.8L1157.5 732.3L1157.8 960L1158.1 727.2L1158.4 903L1158.7 723.6L1159 906.9L1159.3 734.7L1159.6 907.1L1159.9 715.5L1160.2 898.8L1160.5 724.6L1160.8 943.4L1161.1 715.8L1161.4 855.6L1161.7 709.4L1162 895.1L1162.3 718.8L1162.6 922.5L1162.9 718.9L1163.2 960L1163.5 711.1L1163.8 882.4L1164.1 715L1164.4 960L1164.7 710.5L1165 921.7L1165.3 697.8L1165.6 934.8L1165.9 693.2L1166.2 952.6L1166.5 695.1L1166.8 874.1L1167.1 674L1167.4 888.3L1167.7 687.1L1168 901.7L1168.3 686.4L1168.6 957.6L1169 690.7L1169.3 938.2L1169.6 695.3L1169.9 960L1170.2 696.9L1170.5 863.7L1170.8 685.7L1171.1 930.7L1171.4 692L1171.7 890.5L1172 700.1L1172.3 955.2L1172.6 698.6L1172.9 898.6L1173.2 704.8L1173.5 913.6L1173.8 708.3L1174.1 935.5L1174.4 715.3L1174.7 863.8L1175 733.5L1175.3 917.6L1175.6 737.6L1175.9 960L1176.2 743.6L1176.5 931.5L1176.8 732.6L1177.1 913.6L1177.4 727L1177.7 960L1178 715.4L1178.3 928.4L1178.6 729.3L1178.9 908.7L1179.2 738.1L1179.5 953L1179.8 724.4L1180.1 889.8L1180.4 736.8L1180.7 914.4L1181 723.5L1181.3 911.4L1181.6 733L1181.9 927.4L1182.2 717.7L1182.5 932.8L1182.8 731L1183.1 960L1183.4 729.4L1183.7 906.6L1184 730.4L1184.3 960L1184.6 750.2L1184.9 952.8L1185.2 756.7L1185.5 927.9L1185.8 760.9L1186.1 960L1186.4 753.2L1186.7 960L1187 748.6L1187.3 960L1187.6 767.4L1187.9 944.3L1188.2 761.6L1188.5 960L1188.8 749L1189.1 960L1189.4 764.1L1189.7 945.7L1190.1 761.9L1190.4 960L1190.7 783.4L1191 960L1191.3 779.3L1191.6 960L1191.9 769.1L1192.2 960L1192.5 769.6L1192.8 927.6L1193.1 749.1L1193.4 960L1193.7 747.6L1194 942L1194.3 760.6L1194.6 954L1194.9 752.5L1195.2 946.3L1195.5 761.3L1195.8 941.8L1196.1 760.5L1196.4 954.7L1196.7 770.4L1197 960L1197.3 775L1197.6 960L1197.9 771.2L1198.2 943.2L1198.5 772.2L1198.8 960L1199.1 775.6L1199.4 960L1199.7 779.8L1200 960L1200.3 781L1200.6 960L1200.9 784.2L1201.2 960L1201.5 779.5L1201.8 936L1202.1 772.4L1202.4 960L1202.7 771.8L1203 953.6L1203.3 763.9L1203.6 955.7L1203.9 774L1204.2 960L1204.5 766.3L1204.8 960L1205.1 768.3L1205.4 960L1205.7 784.9L1206 957.9L1206.3 783.6L1206.6 960L1206.9 782.1L1207.2 960L1207.5 792.9L1207.8 960L1208.1 788.2L1208.4 960L1208.7 795.4L1209 960L1209.3 794.7L1209.6 960L1209.9 804.9L1210.2 960L1210.5 808.3L1210.8 960L1211.1 823.8L1211.4 960L1211.7 834.4L1212 960L1212.3 835.4L1212.6 960L1212.9 828.2L1213.2 960L1213.5 825.7L1213.8 960L1214.1 815.6L1214.4 960L1214.7 823.3L1215 960L1215.3 825.2L1215.6 960L1215.9 829.5L1216.2 960L1216.5 841.6L1216.8 960L1217.1 848.1L1217.4 960L1217.7 844.4L1218 960L1218.4 832.4L1218.7 960L1219 826.4L1219.3 960L1219.6 842.7L1219.9 960L1220 850.8L1220.3 960" fill="none" stroke="#000" stroke-width="2.4" stroke-linejoin="round" stroke-linecap="round"/>
<path d="M77.500 71V943M42 601.500H1259" stroke="#1515a3" stroke-width="1.200" fill="none"/>
<text x="385" y="263" font-family='Liberation Sans' font-size="10.500" fill="#1a1ab0" text-anchor="middle">1</text>
<text x="473" y="330" font-family='Liberation Sans' font-size="10.500" fill="#1a1ab0" text-anchor="middle">2</text>
<text x="524" y="359" font-family='Liberation Sans' font-size="10.500" fill="#1a1ab0" text-anchor="middle">3</text>
<text x="589" y="482" font-family='Liberation Sans' font-size="10.500" fill="#1a1ab0" text-anchor="middle">5</text>
<text x="612" y="541" font-family='Liberation Sans' font-size="10.500" fill="#1a1ab0" text-anchor="middle">6</text>
<text x="664" y="586" font-family='Liberation Sans' font-size="10.500" fill="#1a1ab0" text-anchor="middle">9</text>
<rect x="556" y="558" width="9" height="13" fill="#dcdcf4"/>
<text x="561" y="569" font-family='Liberation Sans' font-size="10.500" fill="#1a1ab0" text-anchor="middle">4</text>
<rect x="626" y="605" width="9" height="13" fill="#dcdcf4"/>
<text x="631" y="616" font-family='Liberation Sans' font-size="10.500" fill="#1a1ab0" text-anchor="middle">7</text>
<rect x="643" y="605" width="9" height="13" fill="#dcdcf4"/>
<text x="648" y="616" font-family='Liberation Sans' font-size="10.500" fill="#1a1ab0" text-anchor="middle">8</text>
</g></svg>
<div id="ttl" class="abs">напольник с сабом 30 Гц</div>
<div class="abs ylab" style="top:886.5px">-10</div>
<div class="abs ylab" style="top:820.9px">0</div>
<div class="abs ylab" style="top:755.3px">10</div>
<div class="abs ylab" style="top:689.7px">20</div>
<div class="abs ylab" style="top:624.1px">30</div>
<div class="abs ylab" style="top:558.5px">40</div>
<div class="abs ylab" style="top:492.9px">50</div>
<div class="abs ylab" style="top:427.3px">60</div>
<div class="abs ylab" style="top:361.7px">70</div>
<div class="abs ylab" style="top:296.1px">80</div>
<div class="abs ylab" style="top:230.5px">90</div>
<div class="abs ylab" style="top:164.9px">100</div>
<div class="abs ylab" style="top:99.3px">110</div>
<div class="abs" style="left:14px;top:594px;width:26px;height:14px;border:1px solid #1515a3;background:#fff;color:#1515a3;font-size:11px;line-height:12px;text-align:center;letter-spacing:.3px">34,2</div>
<div class="abs xlab" style="left:41.6px">2</div>
<div class="abs xlab" style="left:93.0px">3</div>
<div class="abs xlab" style="left:129.4px">4</div>
<div class="abs xlab" style="left:157.7px">5</div>
<div class="abs xlab" style="left:180.8px">6</div>
<div class="abs xlab" style="left:200.3px">7</div>
<div class="abs xlab" style="left:217.3px">8</div>
<div class="abs xlab" style="left:232.2px">9</div>
<div class="abs xlab" style="left:245.5px">10</div>
<div class="abs xlab" style="left:333.3px">20</div>
<div class="abs xlab" style="left:384.7px">30</div>
<div class="abs xlab" style="left:421.1px">40</div>
<div class="abs xlab" style="left:449.4px">50</div>
<div class="abs xlab" style="left:472.5px">60</div>
<div class="abs xlab" style="left:492.0px">70</div>
<div class="abs xlab" style="left:509.0px">80</div>
<div class="abs xlab" style="left:537.2px">100</div>
<div class="abs xlab" style="left:625.0px">200</div>
<div class="abs xlab" style="left:676.4px">300</div>
<div class="abs xlab" style="left:712.8px">400</div>
<div class="abs xlab" style="left:741.1px">500</div>
<div class="abs xlab" style="left:764.2px">600</div>
<div class="abs xlab" style="left:800.7px">800</div>
<div class="abs xlab" style="left:828.9px">1k</div>
<div class="abs xlab" style="left:916.7px">2k</div>
<div class="abs xlab" style="left:968.1px">3k</div>
<div class="abs xlab" style="left:1004.5px">4k</div>
<div class="abs xlab" style="left:1032.8px">5k</div>
<div class="abs xlab" style="left:1055.9px">6k</div>
<div class="abs xlab" style="left:1075.4px">7k</div>
<div class="abs xlab" style="left:1092.4px">8k</div>
<div class="abs xlab" style="left:1120.6px">10k</div>
<div class="abs xlab" style="left:1208.4px">20k</div>
<div class="abs xlab" style="left:1255px">30,0k Hz</div>
<div class="abs" style="left:65px;top:947px;width:25px;height:14px;border:1px solid #1515a3;background:#fff;color:#1515a3;font-size:11px;line-height:12px;text-align:center;letter-spacing:.3px">2,66</div>
<svg class="abs" style="left:45px;top:74px" width="18" height="18" viewBox="0 0 18 18"><circle cx="6.500" cy="6" r="5" fill="#f4f4f4" stroke="#b5b5b5" stroke-width="1.200"/><path d="M10 9.500l6 5.500" stroke="#222" stroke-width="2"/><path d="M10 9.500l6 5.500" stroke="#999" stroke-width=".6" transform="translate(.8 -.8)"/><circle cx="4" cy="13" r="3.200" fill="#1f3f8f"/><path d="M2.200 13h3.600M4 11.200v3.600" stroke="#fff" stroke-width="1.100" fill="none"/></svg>
<svg class="abs" style="left:45px;top:96px" width="18" height="18" viewBox="0 0 18 18"><circle cx="6.500" cy="6" r="5" fill="#f4f4f4" stroke="#b5b5b5" stroke-width="1.200"/><path d="M10 9.500l6 5.500" stroke="#222" stroke-width="2"/><path d="M10 9.500l6 5.500" stroke="#999" stroke-width=".6" transform="translate(.8 -.8)"/><circle cx="4" cy="13" r="3.200" fill="#1f3f8f"/><path d="M2.200 13h3.600" stroke="#fff" stroke-width="1.100" fill="none"/></svg>
<div class="abs" style="left:1213px;top:921px;width:8px;height:19px;background:#9a9a9a"></div>
<svg class="abs" style="left:1214px;top:922px" width="18" height="18" viewBox="0 0 18 18"><circle cx="6.500" cy="6" r="5" fill="#f4f4f4" stroke="#b5b5b5" stroke-width="1.200"/><path d="M10 9.500l6 5.500" stroke="#222" stroke-width="2"/><path d="M10 9.500l6 5.500" stroke="#999" stroke-width=".6" transform="translate(.8 -.8)"/><circle cx="4" cy="13" r="3.200" fill="#1f3f8f"/><path d="M2.200 13h3.600" stroke="#fff" stroke-width="1.100" fill="none"/></svg>
<svg class="abs" style="left:1236px;top:922px" width="18" height="18" viewBox="0 0 18 18"><circle cx="6.500" cy="6" r="5" fill="#f4f4f4" stroke="#b5b5b5" stroke-width="1.200"/><path d="M10 9.500l6 5.500" stroke="#222" stroke-width="2"/><path d="M10 9.500l6 5.500" stroke="#999" stroke-width=".6" transform="translate(.8 -.8)"/><circle cx="4" cy="13" r="3.200" fill="#1f3f8f"/><path d="M2.200 13h3.600M4 11.200v3.600" stroke="#fff" stroke-width="1.100" fill="none"/></svg>
<div class="abs" style="left:43px;top:119px;width:56px;height:19px;border:1px solid #9c9c9c;background:#fff;font-size:11.500px;line-height:17px;padding-left:8px;letter-spacing:.3px">dB<div class="abs" style="right:0;top:0;width:16px;height:17px;border-left:1px solid #9c9c9c;background:linear-gradient(#f6f6f6,#cfcfcf)"><svg class="abs" style="left:3px;top:6px" width="9" height="5"><path d="M0 0h9L4.500 5z" fill="#333"/></svg></div></div>
<div id="thd" class="abs">
<div style="left:0;width:176px;text-align:center;top:7px;letter-spacing:-.2px"><b>30,1 Hz, -29,1 dB FS</b></div>
<div style="left:5px;top:28px">THD:</div><div style="left:35px;top:28px"><b>28,5</b>%</div><div style="left:90px;top:28px;letter-spacing:.3px">THD+N:</div><div style="left:136px;top:28px"><b>32,7</b>%</div>
<div style="right:162px;top:49px">2nd:</div><div style="right:119px;top:49px"><b>24,0</b>%</div><div style="right:61px;top:49px">3rd:</div><div style="right:18px;top:49px"><b>15,1</b>%</div>
<div style="right:162px;top:70px">4th:</div><div style="right:119px;top:70px"><b>1,13</b>%</div><div style="right:61px;top:70px">5th:</div><div style="right:18px;top:70px"><b>1,64</b>%</div>
<div style="right:162px;top:91px">6th:</div><div style="right:119px;top:91px"><b>0,939</b>%</div><div style="right:61px;top:91px">7th:</div><div style="right:18px;top:91px"><b>0,745</b>%</div>
<div style="right:162px;top:112px">8th:</div><div style="right:119px;top:112px"><b>0,375</b>%</div><div style="right:61px;top:112px">9th:</div><div style="right:18px;top:112px"><b>0,678</b>%</div>
</div>
<div id="lvl" class="abs">87,3 dB</div>
<div class="abs" style="left:1213px;top:74px;width:44px;height:43px;border-radius:4px;border:1px solid #8e9a98;background:linear-gradient(#b3c0be,#c6d0ce 60%,#e2e8e7);box-shadow:inset 0 2px 3px rgba(0,0,0,.42),inset 0 0 2px rgba(0,0,0,.3)"><div class="abs" style="left:12px;top:11px;width:19px;height:19px;border-radius:50%;background:radial-gradient(circle at 48% 45%,#ffa184 0,#ff5a36 40%,#ee3412 72%,#b92a0e 100%);box-shadow:0 0 3px 1px #f09078"></div></div>
<div id="legend" class="abs"><div class="cb" style="left:5px"></div><svg class="abs" style="left:7px;top:4px" width="11" height="11"><path d="M2 5l2.500 3.500L9 1.500" stroke="#3b4d7a" stroke-width="1.800" fill="none"/></svg><div style="left:22px;color:#2f86b0">июл 10 18:38:00</div><div style="left:171px;top:9px;width:31px;height:2px;background:#2f86b0"></div><div style="left:231px;color:#2f86b0">63,8 dB</div>
<div class="cb" style="left:308px"></div><svg class="abs" style="left:310px;top:4px" width="11" height="11"><path d="M2 5l2.500 3.500L9 1.500" stroke="#3b4d7a" stroke-width="1.800" fill="none"/></svg><div style="left:325px">Spectrum</div><div style="left:472px;top:9px;width:31px;height:2px;background:#000"></div><div style="left:533px">53,5 dB</div></div>
<div id="taskbar" class="abs">
<svg class="abs" style="left:8px;top:-5px" width="44" height="36" viewBox="0 0 44 36"><defs><radialGradient id="orb" cx=".5" cy=".35" r=".7"><stop offset="0" stop-color="#9cc6e6"/><stop offset=".45" stop-color="#3a7fb8"/><stop offset="1" stop-color="#123a66"/></radialGradient></defs><circle cx="22" cy="19.500" r="20" fill="url(#orb)" stroke="#8fa3b8" stroke-width="1.200"/><path d="M13 12q4-2 8 0l-1.500 7q-4-2-8 0z" fill="#e8552a"/><path d="M23 12.500q4 2 8 0l-1.500 7q-4 2-8 0z" fill="#7fba2a"/><path d="M11 21q4-2 8 0l-1.500 7q-4-2-8 0z" fill="#3a8ad6"/><path d="M21 21.500q4 2 8 0l-1.500 7q-4 2-8 0z" fill="#f5c21a"/></svg>
<svg class="abs" style="left:68px;top:2px" width="140" height="26" viewBox="0 0 140 26"><text x="3" y="23" font-family="Liberation Sans" font-weight="bold" font-size="30" fill="#2f8fe8">e</text><path d="M4 22q2-14 22-19q-12 5-17 14" fill="#4aa5f0"/><path d="M29 10l5 3.500-5 3.500z" fill="#2d6fc0"/><rect x="42.500" y="6.500" width="15" height="12" fill="#1d3f8a" stroke="#e6eefc"/><rect x="45" y="9" width="6" height="4" fill="#cfe0ff"/><rect x="49" y="12" width="6" height="4" fill="#fff"/><rect x="65.500" y="6.500" width="15" height="12" fill="#2a6cc4" stroke="#dfe8f5"/><rect x="66" y="15" width="14" height="3" fill="#1a2f55"/><text x="89" y="21" font-family="Liberation Serif" font-style="italic" font-weight="bold" font-size="24" fill="#3a9be8">e</text><path d="M88 17q8-12 16-10" stroke="#f2c12e" stroke-width="1.800" fill="none"/><text x="122" y="13" font-family="Liberation Sans" font-size="11" font-weight="bold" fill="#fff">»</text></svg>
<div class="abs tb" style="left:207px;width:125px"><svg class="ti" viewBox="0 0 17 17"><circle cx="8.500" cy="8.500" r="7.500" fill="#e8621a"/><circle cx="8.500" cy="8" r="4.500" fill="#3b5fb8"/><path d="M2 6q3-5 9-4q-4 1-4 4q3 0 3 3q-3 2-5-1z" fill="#f6a21e"/></svg>Mozilla Firefox</div>
<div class="abs tb" style="left:337px;width:125px"><svg class="ti" viewBox="0 0 17 17"><path d="M4 1h8l1.500 2v13H4z" fill="#f1d77a" stroke="#b8962e" stroke-width=".8"/><path d="M4 1v15" stroke="#fff3b0" stroke-width="1.500"/></svg>3 Проводник<svg class="abs" style="right:3px;top:9px" width="9" height="6"><path d="M0 0h9L4.500 5.500z" fill="#fff"/></svg></div>
<div class="abs tb act" style="left:467px;width:128px"><svg class="ti" style="left:5px;top:2px;width:20px;height:19px" viewBox="0 0 20 19"><rect width="20" height="19" fill="#5a2fa8"/><rect x="1" y="11" width="18" height="7" fill="#2fae3a"/><text x="2" y="8" font-family="Liberation Sans" font-weight="bold" font-size="7" fill="#fff">REW</text><path d="M2 15l3-2 3 3 3-4 3 3 4-2" stroke="#114a9e" stroke-width="1.500" fill="none"/></svg>3 Room EQ ...<svg class="abs" style="right:3px;top:9px" width="9" height="6"><path d="M0 0h9L4.500 5.500z" fill="#fff"/></svg></div>
<div class="abs tb" style="left:600px;width:123px"><svg class="ti" style="width:20px" viewBox="0 0 20 17"><rect x=".5" y=".5" width="19" height="16" fill="#2a2f3a" stroke="#e8e8e8"/><path d="M3 8.500v1M5 5v8M7 7v4M9 3v11M11 6v6M13 4v9M15 7v4M17 8v2" stroke="#fff" stroke-width="1.200"/></svg>WavePad by N...</div>
<div class="abs tb" style="left:727px;width:126px"><svg class="ti" viewBox="0 0 17 17"><rect x=".5" y=".5" width="16" height="16" rx="2" fill="#f08a1c" stroke="#ffd08a"/><rect x="3" y="3" width="11" height="11" fill="#2f6fd0"/><path d="M6.500 5l5 3.500-5 3.500z" fill="#fff"/></svg>Проигрывате...</div>
<div class="abs tb" style="left:857px;width:126px"><svg class="ti" viewBox="0 0 17 17"><path d="M3 2l5 12 2-1z" fill="#b5372a"/><path d="M14 2l-5 12-2-1z" fill="#c9a24a"/><circle cx="8.500" cy="5" r="3" fill="#f3e2a8" stroke="#b8962e" stroke-width=".6"/></svg>Безымянный ...</div>
<div class="abs tb" style="left:988px;width:126px"><svg class="ti" viewBox="0 0 17 17"><path d="M3 2l5 12 2-1z" fill="#b5372a"/><path d="M14 2l-5 12-2-1z" fill="#c9a24a"/><circle cx="8.500" cy="5" r="3" fill="#f3e2a8" stroke="#b8962e" stroke-width=".6"/></svg>Напольник с ...</div>
<div class="abs" style="left:1126px;top:5px;color:#fff;font-size:12px;line-height:16px">RU</div>
<svg class="abs" style="left:1158px;top:9px" width="10" height="11"><path d="M8 1L2 5.500 8 10" stroke="#fff" stroke-width="2.200" fill="none"/></svg>
<svg class="abs" style="left:1181px;top:5px" width="61" height="19" viewBox="0 0 70 22"><path d="M4 3v5M8 3v5M2.500 8h7v4l-2 2v5h-3v-5l-2-2z" fill="#f4ecd8" stroke="#f4ecd8" stroke-width="1"/><rect x="9" y="4" width="7" height="12" rx="1" fill="none" stroke="#b9c4d0" stroke-width="1.200"/><path d="M9 11l6 6M15 11l-6 6" stroke="#e0201a" stroke-width="2.200"/><rect x="26.500" y="2.500" width="10" height="8" fill="#3a76c8" stroke="#e8eef8"/><rect x="21.500" y="7.500" width="10" height="8" fill="#3a76c8" stroke="#e8eef8"/><circle cx="33" cy="15" r="4.500" fill="#2f8fd8" stroke="#7fd06a" stroke-width="1"/><path d="M44 8h3l4-4v14l-4-4h-3z" fill="#f0f0f0"/><path d="M54 7q2.500 4 0 8M57 5q4 6 0 12" stroke="#6fcf5a" stroke-width="1.400" fill="none"/></svg>
<div class="abs" style="left:1239px;top:6px;color:#fff;font-size:12px;line-height:16px;letter-spacing:-.2px">19:47</div>
</div>
</body></html>
